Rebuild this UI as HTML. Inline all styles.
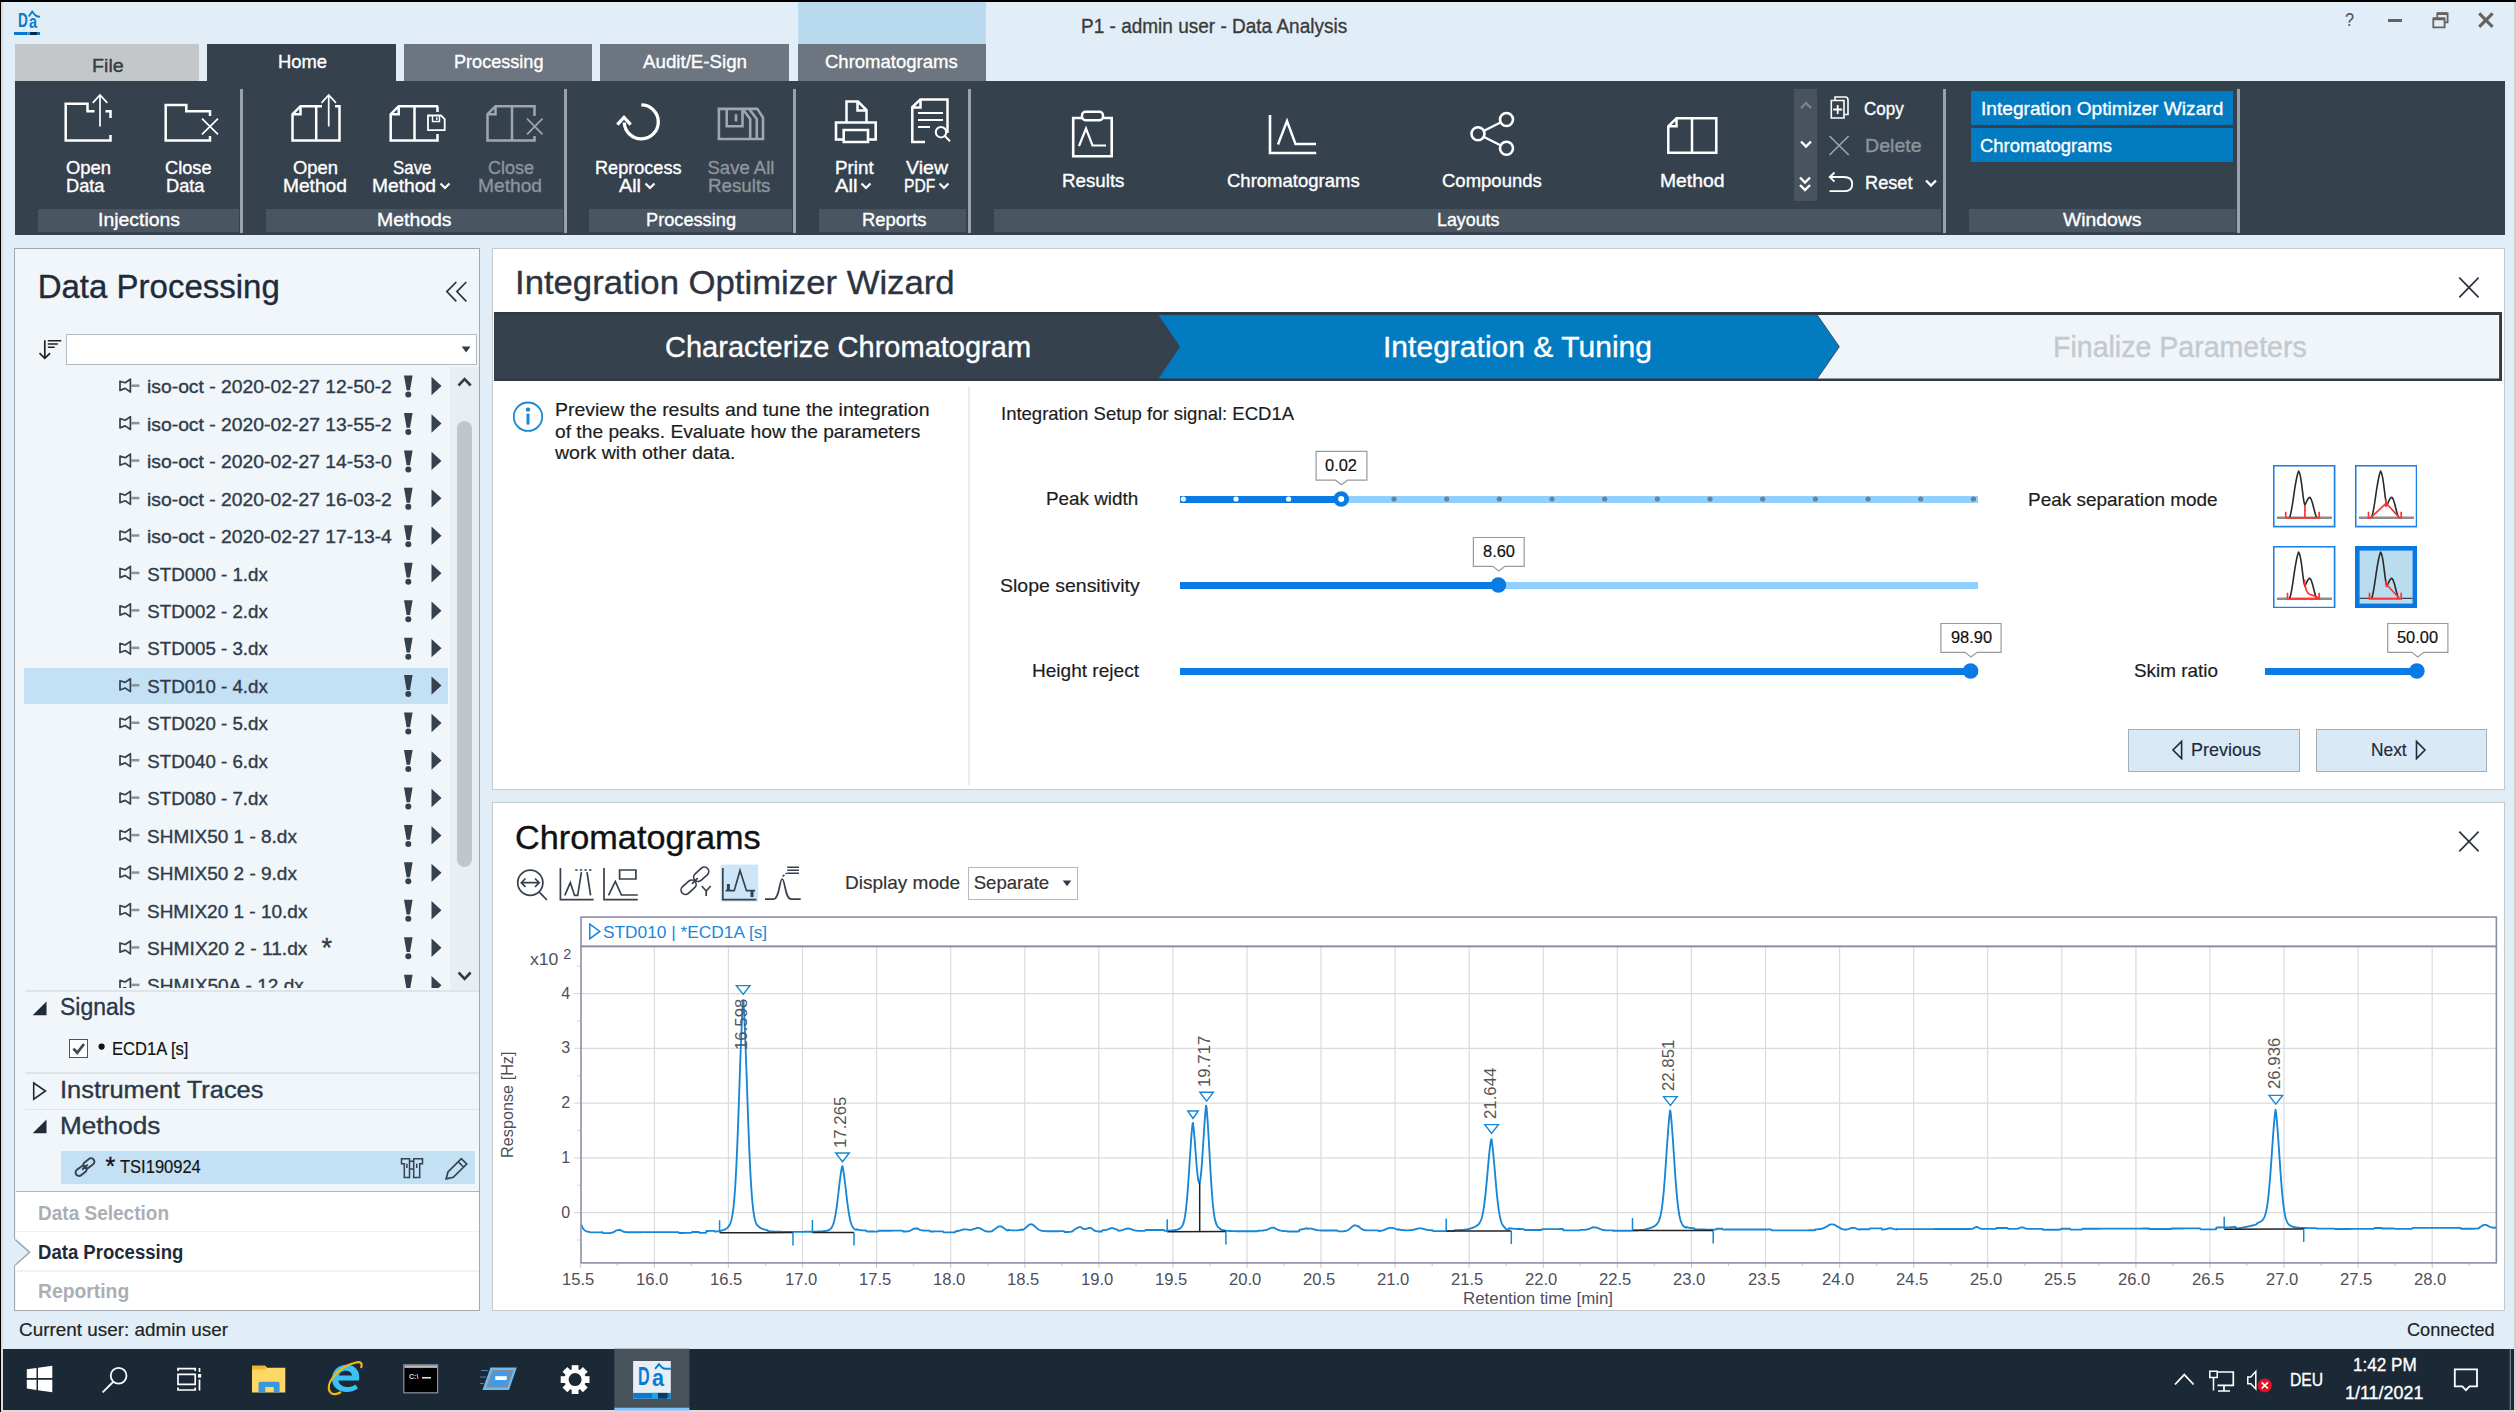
<!DOCTYPE html>
<html><head><meta charset="utf-8"><title>Data Analysis</title>
<style>
html,body{margin:0;padding:0;background:#e1eef7;}
body{width:2516px;height:1412px;position:relative;overflow:hidden;font-family:"Liberation Sans",sans-serif;}
.t{position:absolute;white-space:nowrap;display:block;}
.b{position:absolute;display:block;}
</style></head><body>
<div class="b" style="left:0px;top:0px;width:2516px;height:1412px;background:#e1eef7;"></div>
<div class="b" style="left:0px;top:0px;width:2516px;height:2px;background:#000;"></div>
<div class="b" style="left:0px;top:2px;width:1px;height:1410px;background:#000;"></div>
<div class="b" style="left:1px;top:2px;width:2px;height:1410px;background:#dcdcdc;"></div>
<div class="b" style="left:2514px;top:2px;width:2px;height:1410px;background:#cfcfcf;"></div>
<div class="b" style="left:1px;top:1410.4px;width:2515px;height:1.599999999999909px;background:#dcdcdc;"></div>
<div class="b" style="left:798px;top:2px;width:188px;height:42px;background:#b9d9ee;"></div>
<span class="t" style="left:1080.60px;top:13.62px;font-size:20.5px;line-height:23.555px;color:#3b3b3b;transform:scaleX(0.9271);transform-origin:0 0;-webkit-text-stroke:0.35px #3b3b3b;">P1 - admin user - Data Analysis</span>
<span class="t" style="left:2345.00px;top:10.18px;font-size:17.5px;line-height:20.108px;color:#46566b;transform:scaleX(0.9247);transform-origin:0 0;-webkit-text-stroke:0.18px #46566b;">?</span>
<div class="b" style="left:2387.5px;top:18.6px;width:14.0px;height:3.0px;background:#68625e;"></div>
<svg class="b" style="left:2431px;top:11px;" width="20" height="18" viewBox="0 0 20 18"><path d="M6.3 6.3V2.3H16.6V11.3H13.6M2.3 7.3H13.6V16.3H2.3Z" fill="none" stroke="#68625e" stroke-width="1.8"/><path d="M6.3 2.6H16.6M2.3 7.9H13.6" stroke="#68625e" stroke-width="2.6"/></svg>
<svg class="b" style="left:2476px;top:10px;" width="20" height="20" viewBox="0 0 20 20"><path d="M3.2 3.4L16.6 16.8M16.6 3.4L3.2 16.8" stroke="#68625e" stroke-width="3.1" fill="none"/></svg>
<span class="t" style="left:17.60px;top:9.20px;font-size:20.3px;line-height:23.325px;color:#0a7cc9;font-weight:bold;transform:scaleX(0.6685);transform-origin:0 0;">D</span>
<span class="t" style="left:28.60px;top:11.78px;font-size:17.5px;line-height:20.108px;color:#0a7cc9;font-weight:bold;transform:scaleX(0.8219);transform-origin:0 0;">a</span>
<svg class="b" style="left:27px;top:9px;" width="16" height="10" viewBox="0 0 16 10"><path d="M1.8 7.6L5.2 2.6L8 6Q10 8 13 7.7" fill="none" stroke="#0a7cc9" stroke-width="1.8"/></svg>
<div class="b" style="left:14.3px;top:31.7px;width:15.7px;height:3.8000000000000007px;background:#0878d0;"></div>
<div class="b" style="left:27px;top:31.7px;width:3px;height:3.8000000000000007px;background:#19a8e0;"></div>
<div class="b" style="left:30px;top:31.7px;width:7px;height:3.8000000000000007px;background:#072a55;"></div>
<div class="b" style="left:37px;top:31.7px;width:2.6000000000000014px;height:3.8000000000000007px;background:#0878d0;"></div>
<div class="b" style="left:15px;top:44px;width:184px;height:37px;background:#c3c7ca;"></div>
<div class="b" style="left:207px;top:44px;width:189px;height:38px;background:#36414e;"></div>
<div class="b" style="left:404px;top:44px;width:188px;height:37px;background:#6c7580;"></div>
<div class="b" style="left:600px;top:44px;width:189px;height:37px;background:#6c7580;"></div>
<div class="b" style="left:798px;top:44px;width:188px;height:37px;background:#6c7580;"></div>
<span class="t" style="left:91.80px;top:54.56px;font-size:18.5px;line-height:21.256px;color:#3a3a3a;transform:scaleX(1.0634);transform-origin:0 0;-webkit-text-stroke:0.35px #3a3a3a;">File</span>
<span class="t" style="left:277.50px;top:51.36px;font-size:18.5px;line-height:21.256px;color:#fff;transform:scaleX(0.9929);transform-origin:0 0;-webkit-text-stroke:0.35px #fff;">Home</span>
<span class="t" style="left:454.00px;top:51.36px;font-size:18.5px;line-height:21.256px;color:#fff;transform:scaleX(0.9779);transform-origin:0 0;-webkit-text-stroke:0.35px #fff;">Processing</span>
<span class="t" style="left:642.50px;top:51.36px;font-size:18.5px;line-height:21.256px;color:#fff;transform:scaleX(1.0113);transform-origin:0 0;-webkit-text-stroke:0.35px #fff;">Audit/E-Sign</span>
<span class="t" style="left:825.00px;top:51.36px;font-size:18.5px;line-height:21.256px;color:#fff;-webkit-text-stroke:0.35px #fff;">Chromatograms</span>
<div class="b" style="left:15px;top:81px;width:2490px;height:154.4px;background:#36414e;"></div>
<div class="b" style="left:38px;top:209px;width:201px;height:23px;background:#4a5562;"></div>
<div class="b" style="left:266px;top:209px;width:296.5px;height:23px;background:#4a5562;"></div>
<div class="b" style="left:589px;top:209px;width:203px;height:23px;background:#4a5562;"></div>
<div class="b" style="left:819px;top:209px;width:147px;height:23px;background:#4a5562;"></div>
<div class="b" style="left:994px;top:209px;width:947px;height:23px;background:#4a5562;"></div>
<div class="b" style="left:1969px;top:209px;width:266.5px;height:23px;background:#4a5562;"></div>
<div class="b" style="left:239.5px;top:89px;width:3.0px;height:143.5px;background:#9ba2ab;"></div>
<div class="b" style="left:563.5px;top:89px;width:3.0px;height:143.5px;background:#9ba2ab;"></div>
<div class="b" style="left:793px;top:89px;width:3px;height:143.5px;background:#9ba2ab;"></div>
<div class="b" style="left:967.5px;top:89px;width:3.0px;height:143.5px;background:#9ba2ab;"></div>
<div class="b" style="left:1942.5px;top:89px;width:3.0px;height:143.5px;background:#9ba2ab;"></div>
<div class="b" style="left:2236.5px;top:89px;width:3.0px;height:143.5px;background:#9ba2ab;"></div>
<span class="t" style="left:98.00px;top:208.96px;font-size:18.5px;line-height:21.256px;color:#fff;transform:scaleX(1.0492);transform-origin:0 0;-webkit-text-stroke:0.35px #fff;">Injections</span>
<span class="t" style="left:377.00px;top:208.96px;font-size:18.5px;line-height:21.256px;color:#fff;transform:scaleX(1.0499);transform-origin:0 0;-webkit-text-stroke:0.35px #fff;">Methods</span>
<span class="t" style="left:646.00px;top:208.96px;font-size:18.5px;line-height:21.256px;color:#fff;transform:scaleX(0.9834);transform-origin:0 0;-webkit-text-stroke:0.35px #fff;">Processing</span>
<span class="t" style="left:861.50px;top:208.96px;font-size:18.5px;line-height:21.256px;color:#fff;transform:scaleX(0.9957);transform-origin:0 0;-webkit-text-stroke:0.35px #fff;">Reports</span>
<span class="t" style="left:1437.00px;top:208.96px;font-size:18.5px;line-height:21.256px;color:#fff;transform:scaleX(0.9646);transform-origin:0 0;-webkit-text-stroke:0.35px #fff;">Layouts</span>
<span class="t" style="left:2063.00px;top:208.96px;font-size:18.5px;line-height:21.256px;color:#fff;transform:scaleX(1.0460);transform-origin:0 0;-webkit-text-stroke:0.35px #fff;">Windows</span>
<span class="t" style="left:65.70px;top:156.66px;font-size:18.5px;line-height:21.256px;color:#fff;transform:scaleX(0.9943);transform-origin:0 0;-webkit-text-stroke:0.35px #fff;">Open</span>
<span class="t" style="left:65.50px;top:175.16px;font-size:18.5px;line-height:21.256px;color:#fff;transform:scaleX(0.9852);transform-origin:0 0;-webkit-text-stroke:0.35px #fff;">Data</span>
<span class="t" style="left:164.50px;top:156.66px;font-size:18.5px;line-height:21.256px;color:#fff;transform:scaleX(0.9831);transform-origin:0 0;-webkit-text-stroke:0.35px #fff;">Close</span>
<span class="t" style="left:165.50px;top:175.16px;font-size:18.5px;line-height:21.256px;color:#fff;transform:scaleX(0.9852);transform-origin:0 0;-webkit-text-stroke:0.35px #fff;">Data</span>
<span class="t" style="left:292.50px;top:156.66px;font-size:18.5px;line-height:21.256px;color:#fff;transform:scaleX(0.9943);transform-origin:0 0;-webkit-text-stroke:0.35px #fff;">Open</span>
<span class="t" style="left:282.50px;top:175.16px;font-size:18.5px;line-height:21.256px;color:#fff;transform:scaleX(1.0339);transform-origin:0 0;-webkit-text-stroke:0.35px #fff;">Method</span>
<span class="t" style="left:392.50px;top:156.66px;font-size:18.5px;line-height:21.256px;color:#fff;transform:scaleX(0.9130);transform-origin:0 0;-webkit-text-stroke:0.35px #fff;">Save</span>
<span class="t" style="left:371.50px;top:175.16px;font-size:18.5px;line-height:21.256px;color:#fff;transform:scaleX(1.0371);transform-origin:0 0;-webkit-text-stroke:0.35px #fff;">Method</span>
<svg class="b" style="left:438.5px;top:181px;" width="12" height="10" viewBox="0 0 12 10"><path d="M1.5 2.5L6 7L10.5 2.5" fill="none" stroke="#fff" stroke-width="2.2"/></svg>
<span class="t" style="left:488.00px;top:156.66px;font-size:18.5px;line-height:21.256px;color:#8d949c;transform:scaleX(0.9725);transform-origin:0 0;-webkit-text-stroke:0.35px #8d949c;">Close</span>
<span class="t" style="left:477.50px;top:175.16px;font-size:18.5px;line-height:21.256px;color:#8d949c;transform:scaleX(1.0371);transform-origin:0 0;-webkit-text-stroke:0.35px #8d949c;">Method</span>
<span class="t" style="left:594.50px;top:156.66px;font-size:18.5px;line-height:21.256px;color:#fff;transform:scaleX(0.9782);transform-origin:0 0;-webkit-text-stroke:0.35px #fff;">Reprocess</span>
<span class="t" style="left:619.00px;top:175.16px;font-size:18.5px;line-height:21.256px;color:#fff;transform:scaleX(1.0700);transform-origin:0 0;-webkit-text-stroke:0.35px #fff;">All</span>
<svg class="b" style="left:644px;top:181px;" width="12" height="10" viewBox="0 0 12 10"><path d="M1.5 2.5L6 7L10.5 2.5" fill="none" stroke="#fff" stroke-width="2.2"/></svg>
<span class="t" style="left:707.50px;top:156.66px;font-size:18.5px;line-height:21.256px;color:#8d949c;-webkit-text-stroke:0.35px #8d949c;">Save All</span>
<span class="t" style="left:707.50px;top:175.16px;font-size:18.5px;line-height:21.256px;color:#8d949c;transform:scaleX(1.0131);transform-origin:0 0;-webkit-text-stroke:0.35px #8d949c;">Results</span>
<span class="t" style="left:835.00px;top:156.66px;font-size:18.5px;line-height:21.256px;color:#fff;transform:scaleX(1.0173);transform-origin:0 0;-webkit-text-stroke:0.35px #fff;">Print</span>
<span class="t" style="left:834.50px;top:175.16px;font-size:18.5px;line-height:21.256px;color:#fff;transform:scaleX(1.0943);transform-origin:0 0;-webkit-text-stroke:0.35px #fff;">All</span>
<svg class="b" style="left:860px;top:181px;" width="12" height="10" viewBox="0 0 12 10"><path d="M1.5 2.5L6 7L10.5 2.5" fill="none" stroke="#fff" stroke-width="2.2"/></svg>
<span class="t" style="left:906.00px;top:156.66px;font-size:18.5px;line-height:21.256px;color:#fff;transform:scaleX(1.0562);transform-origin:0 0;-webkit-text-stroke:0.35px #fff;">View</span>
<span class="t" style="left:903.70px;top:175.16px;font-size:18.5px;line-height:21.256px;color:#fff;transform:scaleX(0.8459);transform-origin:0 0;-webkit-text-stroke:0.35px #fff;">PDF</span>
<svg class="b" style="left:938px;top:181px;" width="12" height="10" viewBox="0 0 12 10"><path d="M1.5 2.5L6 7L10.5 2.5" fill="none" stroke="#fff" stroke-width="2.2"/></svg>
<span class="t" style="left:1062.00px;top:169.96px;font-size:18.5px;line-height:21.256px;color:#fff;transform:scaleX(1.0131);transform-origin:0 0;-webkit-text-stroke:0.35px #fff;">Results</span>
<span class="t" style="left:1227.00px;top:169.96px;font-size:18.5px;line-height:21.256px;color:#fff;-webkit-text-stroke:0.35px #fff;">Chromatograms</span>
<span class="t" style="left:1442.00px;top:169.96px;font-size:18.5px;line-height:21.256px;color:#fff;-webkit-text-stroke:0.35px #fff;">Compounds</span>
<span class="t" style="left:1660.00px;top:169.96px;font-size:18.5px;line-height:21.256px;color:#fff;transform:scaleX(1.0453);transform-origin:0 0;-webkit-text-stroke:0.35px #fff;">Method</span>
<div class="b" style="left:1794px;top:89px;width:23px;height:112px;background:#49535f;"></div>
<svg class="b" style="left:1799px;top:100px;" width="14" height="10" viewBox="0 0 14 10"><path d="M2 8L7 3L12 8" fill="none" stroke="#7d8690" stroke-width="2.2"/></svg>
<svg class="b" style="left:1799px;top:139px;" width="14" height="10" viewBox="0 0 14 10"><path d="M2 2.5L7 7.5L12 2.5" fill="none" stroke="#fff" stroke-width="2.4"/></svg>
<svg class="b" style="left:1798px;top:175px;" width="14" height="18" viewBox="0 0 14 18"><path d="M2 2.5L7 7.5L12 2.5M2 10L7 15L12 10" fill="none" stroke="#fff" stroke-width="2.4"/></svg>
<span class="t" style="left:1864.00px;top:97.96px;font-size:18.5px;line-height:21.256px;color:#fff;transform:scaleX(0.9192);transform-origin:0 0;-webkit-text-stroke:0.35px #fff;">Copy</span>
<span class="t" style="left:1865.00px;top:135.46px;font-size:18.5px;line-height:21.256px;color:#8d949c;transform:scaleX(1.0602);transform-origin:0 0;-webkit-text-stroke:0.35px #8d949c;">Delete</span>
<span class="t" style="left:1865.00px;top:171.66px;font-size:18.5px;line-height:21.256px;color:#fff;transform:scaleX(0.9829);transform-origin:0 0;-webkit-text-stroke:0.35px #fff;">Reset</span>
<svg class="b" style="left:1924px;top:178px;" width="14" height="10" viewBox="0 0 14 10"><path d="M2 2.5L7 7.5L12 2.5" fill="none" stroke="#fff" stroke-width="2.4"/></svg>
<div class="b" style="left:1970.5px;top:90.5px;width:262.5px;height:34.5px;background:#037bc1;"></div>
<div class="b" style="left:1970.5px;top:128px;width:262.5px;height:34px;background:#037bc1;"></div>
<span class="t" style="left:1980.70px;top:97.96px;font-size:18.5px;line-height:21.256px;color:#fff;transform:scaleX(1.0336);transform-origin:0 0;-webkit-text-stroke:0.35px #fff;">Integration Optimizer Wizard</span>
<span class="t" style="left:1980.00px;top:135.46px;font-size:18.5px;line-height:21.256px;color:#fff;transform:scaleX(0.9952);transform-origin:0 0;-webkit-text-stroke:0.35px #fff;">Chromatograms</span>
<svg class="b" style="left:0px;top:0px;" width="2516" height="240" viewBox="0 0 2516 240"><path d="M110.5 135V140.5H65.7V103.7H87.5V111.2H94.5 M105.5 111.2H110.5V118" fill="none" stroke="#fff" stroke-width="2.5" /><path d="M100 126.5V95 M92.7 102.8L100 95L107.3 102.8" fill="none" stroke="#fff" stroke-width="1.7" /><path d="M210 136V140.5H165.7V104.9H186.3V111.2H210V116" fill="none" stroke="#fff" stroke-width="2.5" /><path d="M202 118.7L218 134.3M218 118.7L202 134.3" fill="none" stroke="#fff" stroke-width="1.7" /><path d="M322 106.2H300.5L292.5 114.2V140.5H339.5V111 M316.2 106.2V140.5 M292.5 114.2H300.5V106.2 M335 106.2H339.5V111" fill="none" stroke="#fff" stroke-width="2.5" /><path d="M328.7 126.5V95 M321.5 102.8L328.7 95L336 102.8" fill="none" stroke="#fff" stroke-width="1.7" /><path d="M438 106.2H398.7L390.7 114.2V140.5H437.5V134 M414.5 106.2V140.5 M390.7 114.2H398.7V106.2 M437.5 106.2V112" fill="none" stroke="#fff" stroke-width="2.5" /><path d="M428 115.5H441L444.7 119.2V130.2H428Z" fill="#36414e" stroke="#fff" stroke-width="1.8" /><path d="M432.5 116V121.5H439.5V116 M436.8 117.2V120" fill="none" stroke="#fff" stroke-width="1.4" /><path d="M534.5 116V106.2H495.5L487.5 114.2V140.5H534.5V136 M512 106.2V140.5 M487.5 114.2H495.5V106.2" fill="none" stroke="#a0a6b0" stroke-width="2.5" /><path d="M527 118.7L542.5 134.3M542.5 118.7L527 134.3" fill="none" stroke="#a0a6b0" stroke-width="1.7" /><path d="M641.3 104.9A17 17 0 1 1 624.3 122.5" fill="none" stroke="#fff" stroke-width="3.3" /><path d="M617.3 124.6L624 117.4L630.7 124.6" fill="none" stroke="#fff" stroke-width="3.3" /><path d="M718.9 108.9H757.3L763 117.5V139H718.9Z M726.7 109V126.3H742.5V109 M736 114.2V121.4" fill="none" stroke="#a0a6b0" stroke-width="2.6" /><path d="M743 109.5L750.2 119V139 M749.5 109.5L756.8 119V139" fill="none" stroke="#a0a6b0" stroke-width="2.6" /><path d="M846.5 122V101.5H858L866.5 110V122 M857.5 101.5V110.5H866.5" fill="none" stroke="#fff" stroke-width="2.5" /><path d="M843.5 139.5H836V122.5H875.7V139.5H868" fill="none" stroke="#fff" stroke-width="2.6" /><path d="M843.7 130H868V142H843.7Z" fill="none" stroke="#fff" stroke-width="2.6" /><path d="M925 142H912.3V107L920.3 99.5H947.5V133 M912.5 107.5H920.5V99.5" fill="none" stroke="#fff" stroke-width="2.5" /><path d="M918 113H943M918 120H943M918 127H930" fill="none" stroke="#fff" stroke-width="2.2" /><path d="M941 132.2m-5.2 0a5.2 5.2 0 1 0 10.4 0a5.2 5.2 0 1 0 -10.4 0 M944.8 136L950 141.2" fill="#36414e" stroke="#fff" stroke-width="2" /><path d="M1082 118H1073.2V156.2H1111.7V118H1103" fill="none" stroke="#fff" stroke-width="2.6" /><rect x="1082" y="111.7" width="21" height="8.6" rx="3.5" fill="none" stroke="#fff" stroke-width="2.4"/><path d="M1079 146L1086 128.5L1092.5 145.5H1106" fill="none" stroke="#fff" stroke-width="2.2" /><path d="M1270 115V153H1316.2" fill="none" stroke="#fff" stroke-width="2.6" /><path d="M1278 144.5L1287 121L1295.5 144H1316" fill="none" stroke="#fff" stroke-width="2.4" /><path d="M1484 130.7L1500.5 122.5 M1484 137L1500.5 145.2" fill="none" stroke="#fff" stroke-width="2.4" /><circle cx="1506.5" cy="119.5" r="6.5" fill="none" stroke="#fff" stroke-width="2.6"/><circle cx="1478" cy="133.8" r="6.5" fill="none" stroke="#fff" stroke-width="2.6"/><circle cx="1506.5" cy="148.2" r="6.5" fill="none" stroke="#fff" stroke-width="2.6"/><path d="M1676.5 118.2H1716.3V152.7H1668.3V126.3Z M1692 118.2V152.7 M1668.3 126.3H1676.5V118.2" fill="none" stroke="#fff" stroke-width="2.5" /><path d="M1831.3 100.5H1844V118H1831.3Z" fill="none" stroke="#fff" stroke-width="1.6" /><path d="M1835 100V97H1845.5Q1848 97 1848 100V114.5H1844.5" fill="none" stroke="#fff" stroke-width="1.6" /><path d="M1837.7 105V114M1833.2 109.5H1842.2" fill="none" stroke="#fff" stroke-width="1.8" /><path d="M1829.5 136L1848.7 155M1848.7 136L1829.5 155" fill="none" stroke="#a0a6b0" stroke-width="1.6" /><path d="M1829.5 177H1844Q1852.2 177 1852.2 184.2Q1852.2 191.2 1844 191.2H1829.5" fill="none" stroke="#fff" stroke-width="1.8" /><path d="M1834.5 172.5L1829.7 177L1834.5 181.7" fill="none" stroke="#fff" stroke-width="1.8" /></svg>
<div class="b" style="left:14.4px;top:248px;width:465.6px;height:1063.2px;background:#f1f6fa;border:1.8px solid #a3a9b1;box-sizing:border-box;"></div>
<span class="t" style="left:37.70px;top:267.61px;font-size:33px;line-height:37.917px;color:#1f2b3a;-webkit-text-stroke:0.35px #1f2b3a;">Data Processing</span>
<svg class="b" style="left:444px;top:280px;" width="26" height="24" viewBox="0 0 26 24"><path d="M12.3 2L2.8 11.6L12.3 21.3M22.3 2L12.9 11.6L22.3 21.3" fill="none" stroke="#2b3440" stroke-width="1.7"/></svg>
<svg class="b" style="left:36px;top:336px;" width="30" height="26" viewBox="0 0 30 26"><path d="M8.8 4.3V22M3.5 17.2L8.8 22.3L14.1 17.2" fill="none" stroke="#222" stroke-width="1.7"/><path d="M11.8 4.7H25.3M11.8 8.1H21.8M11.8 11.3H18.6" stroke="#222" stroke-width="1.5"/></svg>
<div class="b" style="left:66px;top:334px;width:410.5px;height:30.69999999999999px;background:#fff;border:1.5px solid #b3babf;box-sizing:border-box;"></div>
<svg class="b" style="left:460px;top:345px;" width="12" height="9" viewBox="0 0 12 9"><path d="M1.7 1.4H10.5L6.1 7.4Z" fill="#2f3b49"/></svg>
<div class="b" style="left:450.4px;top:367px;width:28.200000000000045px;height:623px;background:#e9eef2;"></div>
<svg class="b" style="left:456px;top:375px;" width="18" height="13" viewBox="0 0 18 13"><path d="M2.5 10.5L8.6 4.2L14.7 10.5" fill="none" stroke="#2f3b49" stroke-width="2.6"/></svg>
<svg class="b" style="left:456px;top:969px;" width="18" height="13" viewBox="0 0 18 13"><path d="M2.6 3.5L8.6 9.8L14.6 3.5" fill="none" stroke="#2f3b49" stroke-width="2.6"/></svg>
<div class="b" style="left:456.7px;top:421px;width:15.300000000000011px;height:445.6px;background:#c1c6ca;border-radius:7.6px;"></div>
<div class="b" style="left:24px;top:668.1px;width:424.4px;height:35.5px;background:#c3e0f4;"></div>
<div class="b" style="left:16px;top:366px;width:434px;height:621.5px;overflow:hidden;">
<span class="t" style="left:131.30px;top:10.28px;font-size:18.7px;line-height:21.486px;color:#2f3b49;transform:scaleX(1.0337);transform-origin:0 0;-webkit-text-stroke:0.35px #2f3b49;">iso-oct - 2020-02-27 12-50-2</span>
<span class="t" style="left:131.30px;top:47.73px;font-size:18.7px;line-height:21.486px;color:#2f3b49;transform:scaleX(1.0337);transform-origin:0 0;-webkit-text-stroke:0.35px #2f3b49;">iso-oct - 2020-02-27 13-55-2</span>
<span class="t" style="left:131.30px;top:85.18px;font-size:18.7px;line-height:21.486px;color:#2f3b49;transform:scaleX(1.0337);transform-origin:0 0;-webkit-text-stroke:0.35px #2f3b49;">iso-oct - 2020-02-27 14-53-0</span>
<span class="t" style="left:131.30px;top:122.63px;font-size:18.7px;line-height:21.486px;color:#2f3b49;transform:scaleX(1.0337);transform-origin:0 0;-webkit-text-stroke:0.35px #2f3b49;">iso-oct - 2020-02-27 16-03-2</span>
<span class="t" style="left:131.30px;top:160.08px;font-size:18.7px;line-height:21.486px;color:#2f3b49;transform:scaleX(1.0337);transform-origin:0 0;-webkit-text-stroke:0.35px #2f3b49;">iso-oct - 2020-02-27 17-13-4</span>
<span class="t" style="left:131.30px;top:197.53px;font-size:18.7px;line-height:21.486px;color:#2f3b49;-webkit-text-stroke:0.35px #2f3b49;">STD000 - 1.dx</span>
<span class="t" style="left:131.30px;top:234.98px;font-size:18.7px;line-height:21.486px;color:#2f3b49;-webkit-text-stroke:0.35px #2f3b49;">STD002 - 2.dx</span>
<span class="t" style="left:131.30px;top:272.43px;font-size:18.7px;line-height:21.486px;color:#2f3b49;-webkit-text-stroke:0.35px #2f3b49;">STD005 - 3.dx</span>
<span class="t" style="left:131.30px;top:309.88px;font-size:18.7px;line-height:21.486px;color:#2f3b49;-webkit-text-stroke:0.35px #2f3b49;">STD010 - 4.dx</span>
<span class="t" style="left:131.30px;top:347.33px;font-size:18.7px;line-height:21.486px;color:#2f3b49;-webkit-text-stroke:0.35px #2f3b49;">STD020 - 5.dx</span>
<span class="t" style="left:131.30px;top:384.78px;font-size:18.7px;line-height:21.486px;color:#2f3b49;-webkit-text-stroke:0.35px #2f3b49;">STD040 - 6.dx</span>
<span class="t" style="left:131.30px;top:422.23px;font-size:18.7px;line-height:21.486px;color:#2f3b49;-webkit-text-stroke:0.35px #2f3b49;">STD080 - 7.dx</span>
<span class="t" style="left:131.30px;top:459.68px;font-size:18.7px;line-height:21.486px;color:#2f3b49;transform:scaleX(1.0164);transform-origin:0 0;-webkit-text-stroke:0.35px #2f3b49;">SHMIX50 1 - 8.dx</span>
<span class="t" style="left:131.30px;top:497.13px;font-size:18.7px;line-height:21.486px;color:#2f3b49;transform:scaleX(1.0164);transform-origin:0 0;-webkit-text-stroke:0.35px #2f3b49;">SHMIX50 2 - 9.dx</span>
<span class="t" style="left:131.30px;top:534.58px;font-size:18.7px;line-height:21.486px;color:#2f3b49;transform:scaleX(1.0159);transform-origin:0 0;-webkit-text-stroke:0.35px #2f3b49;">SHMIX20 1 - 10.dx</span>
<span class="t" style="left:131.30px;top:572.03px;font-size:18.7px;line-height:21.486px;color:#2f3b49;transform:scaleX(1.0249);transform-origin:0 0;-webkit-text-stroke:0.35px #2f3b49;">SHMIX20 2 - 11.dx</span>
<span class="t" style="left:131.30px;top:609.48px;font-size:18.7px;line-height:21.486px;color:#2f3b49;transform:scaleX(1.0206);transform-origin:0 0;-webkit-text-stroke:0.35px #2f3b49;">SHMIX50A - 12.dx</span>
<svg class="b" style="left:0px;top:0px;" width="434" height="640" viewBox="0 0 434 640"><path d="M104 15.2V24.4L109.2 22.4L114.4 26.0V13.2L109.2 16.8Z" fill="none" stroke="#36414e" stroke-width="1.7" stroke-linejoin="round"/><path d="M115.30000000000001 19.7H123.4" stroke="#89929b" stroke-width="2.5"/><path d="M388 9.5H396.6L394 24.3H390.6Z" fill="#36414e"/><circle cx="392.3" cy="28.5" r="3" fill="#36414e"/><path d="M415.5 10.8L425.5 20.0L415.5 29.2Z" fill="#36414e"/><path d="M104 52.64999999999999V61.84999999999999L109.2 59.84999999999999L114.4 63.44999999999999V50.64999999999999L109.2 54.249999999999986Z" fill="none" stroke="#36414e" stroke-width="1.7" stroke-linejoin="round"/><path d="M115.30000000000001 57.14999999999999H123.4" stroke="#89929b" stroke-width="2.5"/><path d="M388 46.94999999999999H396.6L394 61.749999999999986H390.6Z" fill="#36414e"/><circle cx="392.3" cy="65.94999999999999" r="3" fill="#36414e"/><path d="M415.5 48.249999999999986L425.5 57.44999999999999L415.5 66.64999999999999Z" fill="#36414e"/><path d="M104 90.09999999999998V99.29999999999998L109.2 97.29999999999998L114.4 100.89999999999998V88.09999999999998L109.2 91.69999999999997Z" fill="none" stroke="#36414e" stroke-width="1.7" stroke-linejoin="round"/><path d="M115.30000000000001 94.59999999999998H123.4" stroke="#89929b" stroke-width="2.5"/><path d="M388 84.39999999999998H396.6L394 99.19999999999997H390.6Z" fill="#36414e"/><circle cx="392.3" cy="103.39999999999998" r="3" fill="#36414e"/><path d="M415.5 85.69999999999997L425.5 94.89999999999998L415.5 104.09999999999998Z" fill="#36414e"/><path d="M104 127.55000000000003V136.75000000000003L109.2 134.75000000000003L114.4 138.35000000000002V125.55000000000003L109.2 129.15000000000003Z" fill="none" stroke="#36414e" stroke-width="1.7" stroke-linejoin="round"/><path d="M115.30000000000001 132.05H123.4" stroke="#89929b" stroke-width="2.5"/><path d="M388 121.85000000000002H396.6L394 136.65000000000003H390.6Z" fill="#36414e"/><circle cx="392.3" cy="140.85000000000002" r="3" fill="#36414e"/><path d="M415.5 123.15000000000002L425.5 132.35000000000002L415.5 141.55Z" fill="#36414e"/><path d="M104 164.99999999999994V174.19999999999996L109.2 172.19999999999996L114.4 175.79999999999995V162.99999999999994L109.2 166.59999999999997Z" fill="none" stroke="#36414e" stroke-width="1.7" stroke-linejoin="round"/><path d="M115.30000000000001 169.49999999999994H123.4" stroke="#89929b" stroke-width="2.5"/><path d="M388 159.29999999999995H396.6L394 174.09999999999997H390.6Z" fill="#36414e"/><circle cx="392.3" cy="178.29999999999995" r="3" fill="#36414e"/><path d="M415.5 160.59999999999997L425.5 169.79999999999995L415.5 178.99999999999994Z" fill="#36414e"/><path d="M104 202.45V211.65L109.2 209.65L114.4 213.25V200.45L109.2 204.05Z" fill="none" stroke="#36414e" stroke-width="1.7" stroke-linejoin="round"/><path d="M115.30000000000001 206.95H123.4" stroke="#89929b" stroke-width="2.5"/><path d="M388 196.75H396.6L394 211.55H390.6Z" fill="#36414e"/><circle cx="392.3" cy="215.75" r="3" fill="#36414e"/><path d="M415.5 198.05L425.5 207.25L415.5 216.45Z" fill="#36414e"/><path d="M104 239.90000000000003V249.10000000000005L109.2 247.10000000000005L114.4 250.70000000000005V237.90000000000003L109.2 241.50000000000006Z" fill="none" stroke="#36414e" stroke-width="1.7" stroke-linejoin="round"/><path d="M115.30000000000001 244.40000000000003H123.4" stroke="#89929b" stroke-width="2.5"/><path d="M388 234.20000000000005H396.6L394 249.00000000000006H390.6Z" fill="#36414e"/><circle cx="392.3" cy="253.20000000000005" r="3" fill="#36414e"/><path d="M415.5 235.50000000000006L425.5 244.70000000000005L415.5 253.90000000000003Z" fill="#36414e"/><path d="M104 277.3500000000001V286.55000000000007L109.2 284.55000000000007L114.4 288.1500000000001V275.3500000000001L109.2 278.9500000000001Z" fill="none" stroke="#36414e" stroke-width="1.7" stroke-linejoin="round"/><path d="M115.30000000000001 281.8500000000001H123.4" stroke="#89929b" stroke-width="2.5"/><path d="M388 271.6500000000001H396.6L394 286.4500000000001H390.6Z" fill="#36414e"/><circle cx="392.3" cy="290.6500000000001" r="3" fill="#36414e"/><path d="M415.5 272.9500000000001L425.5 282.1500000000001L415.5 291.3500000000001Z" fill="#36414e"/><path d="M104 314.8V324.0L109.2 322.0L114.4 325.6V312.8L109.2 316.40000000000003Z" fill="none" stroke="#36414e" stroke-width="1.7" stroke-linejoin="round"/><path d="M115.30000000000001 319.3H123.4" stroke="#89929b" stroke-width="2.5"/><path d="M388 309.1H396.6L394 323.90000000000003H390.6Z" fill="#36414e"/><circle cx="392.3" cy="328.1" r="3" fill="#36414e"/><path d="M415.5 310.40000000000003L425.5 319.6L415.5 328.8Z" fill="#36414e"/><path d="M104 352.24999999999994V361.44999999999993L109.2 359.44999999999993L114.4 363.04999999999995V350.24999999999994L109.2 353.84999999999997Z" fill="none" stroke="#36414e" stroke-width="1.7" stroke-linejoin="round"/><path d="M115.30000000000001 356.74999999999994H123.4" stroke="#89929b" stroke-width="2.5"/><path d="M388 346.54999999999995H396.6L394 361.34999999999997H390.6Z" fill="#36414e"/><circle cx="392.3" cy="365.54999999999995" r="3" fill="#36414e"/><path d="M415.5 347.84999999999997L425.5 357.04999999999995L415.5 366.24999999999994Z" fill="#36414e"/><path d="M104 389.7V398.9L109.2 396.9L114.4 400.5V387.7L109.2 391.3Z" fill="none" stroke="#36414e" stroke-width="1.7" stroke-linejoin="round"/><path d="M115.30000000000001 394.2H123.4" stroke="#89929b" stroke-width="2.5"/><path d="M388 384.0H396.6L394 398.8H390.6Z" fill="#36414e"/><circle cx="392.3" cy="403.0" r="3" fill="#36414e"/><path d="M415.5 385.3L425.5 394.5L415.5 403.7Z" fill="#36414e"/><path d="M104 427.15000000000003V436.35L109.2 434.35L114.4 437.95000000000005V425.15000000000003L109.2 428.75000000000006Z" fill="none" stroke="#36414e" stroke-width="1.7" stroke-linejoin="round"/><path d="M115.30000000000001 431.65000000000003H123.4" stroke="#89929b" stroke-width="2.5"/><path d="M388 421.45000000000005H396.6L394 436.25000000000006H390.6Z" fill="#36414e"/><circle cx="392.3" cy="440.45000000000005" r="3" fill="#36414e"/><path d="M415.5 422.75000000000006L425.5 431.95000000000005L415.5 441.15000000000003Z" fill="#36414e"/><path d="M104 464.6000000000001V473.80000000000007L109.2 471.80000000000007L114.4 475.4000000000001V462.6000000000001L109.2 466.2000000000001Z" fill="none" stroke="#36414e" stroke-width="1.7" stroke-linejoin="round"/><path d="M115.30000000000001 469.1000000000001H123.4" stroke="#89929b" stroke-width="2.5"/><path d="M388 458.9000000000001H396.6L394 473.7000000000001H390.6Z" fill="#36414e"/><circle cx="392.3" cy="477.9000000000001" r="3" fill="#36414e"/><path d="M415.5 460.2000000000001L425.5 469.4000000000001L415.5 478.6000000000001Z" fill="#36414e"/><path d="M104 502.05V511.25L109.2 509.25L114.4 512.85V500.05L109.2 503.65000000000003Z" fill="none" stroke="#36414e" stroke-width="1.7" stroke-linejoin="round"/><path d="M115.30000000000001 506.55H123.4" stroke="#89929b" stroke-width="2.5"/><path d="M388 496.35H396.6L394 511.15000000000003H390.6Z" fill="#36414e"/><circle cx="392.3" cy="515.35" r="3" fill="#36414e"/><path d="M415.5 497.65000000000003L425.5 506.85L415.5 516.0500000000001Z" fill="#36414e"/><path d="M104 539.5000000000001V548.7L109.2 546.7L114.4 550.3000000000001V537.5000000000001L109.2 541.1Z" fill="none" stroke="#36414e" stroke-width="1.7" stroke-linejoin="round"/><path d="M115.30000000000001 544.0000000000001H123.4" stroke="#89929b" stroke-width="2.5"/><path d="M388 533.8000000000001H396.6L394 548.6H390.6Z" fill="#36414e"/><circle cx="392.3" cy="552.8000000000001" r="3" fill="#36414e"/><path d="M415.5 535.1L425.5 544.3000000000001L415.5 553.5000000000001Z" fill="#36414e"/><path d="M104 576.95V586.15L109.2 584.15L114.4 587.75V574.95L109.2 578.55Z" fill="none" stroke="#36414e" stroke-width="1.7" stroke-linejoin="round"/><path d="M115.30000000000001 581.45H123.4" stroke="#89929b" stroke-width="2.5"/><path d="M388 571.25H396.6L394 586.05H390.6Z" fill="#36414e"/><circle cx="392.3" cy="590.25" r="3" fill="#36414e"/><path d="M415.5 572.55L425.5 581.75L415.5 590.95Z" fill="#36414e"/><path d="M104 614.4000000000001V623.6L109.2 621.6L114.4 625.2V612.4000000000001L109.2 616.0Z" fill="none" stroke="#36414e" stroke-width="1.7" stroke-linejoin="round"/><path d="M115.30000000000001 618.9000000000001H123.4" stroke="#89929b" stroke-width="2.5"/><path d="M388 608.7H396.6L394 623.5H390.6Z" fill="#36414e"/><circle cx="392.3" cy="627.7" r="3" fill="#36414e"/><path d="M415.5 610.0L425.5 619.2L415.5 628.4000000000001Z" fill="#36414e"/></svg>
<span class="t" style="left:305.50px;top:567.38px;font-size:27px;line-height:31.023px;color:#2f3b49;-webkit-text-stroke:0.35px #2f3b49;">*</span>
</div>
<div class="b" style="left:25px;top:990px;width:454px;height:1.5px;background:#dfe4e8;"></div>
<svg class="b" style="left:30px;top:999px;" width="20" height="20" viewBox="0 0 20 20"><path d="M16.5 2.4V16.2H2.7Z" fill="#1f2b3a"/></svg>
<span class="t" style="left:60.30px;top:993.94px;font-size:23.3px;line-height:26.772px;color:#2a3747;transform:scaleX(0.9853);transform-origin:0 0;-webkit-text-stroke:0.35px #2a3747;">Signals</span>
<div class="b" style="left:68.8px;top:1038.8px;width:19.60000000000001px;height:19.600000000000136px;background:#fff;border:1.9px solid #4a5568;box-sizing:border-box;"></div>
<svg class="b" style="left:69px;top:1039px;" width="20" height="20" viewBox="0 0 20 20"><path d="M4.4 9.6L8.2 13.8L15 5" fill="none" stroke="#3d4a5c" stroke-width="2.8"/></svg>
<svg class="b" style="left:97px;top:1042px;" width="10" height="10" viewBox="0 0 10 10"><circle cx="4.6" cy="4.6" r="3.1" fill="#111"/></svg>
<span class="t" style="left:111.50px;top:1038.61px;font-size:17.8px;line-height:20.452px;color:#111;transform:scaleX(0.9317);transform-origin:0 0;-webkit-text-stroke:0.18px #111;">ECD1A [s]</span>
<div class="b" style="left:25px;top:1072px;width:454px;height:1.5px;background:#dfe4e8;"></div>
<svg class="b" style="left:30px;top:1080px;" width="20" height="22" viewBox="0 0 20 22"><path d="M3.7 3L15.5 11L3.7 19.2Z" fill="none" stroke="#1f2b3a" stroke-width="1.6"/></svg>
<span class="t" style="left:60.30px;top:1076.54px;font-size:23.3px;line-height:26.772px;color:#2a3747;transform:scaleX(1.0913);transform-origin:0 0;-webkit-text-stroke:0.35px #2a3747;">Instrument Traces</span>
<div class="b" style="left:25px;top:1108.5px;width:454px;height:1.5px;background:#dfe4e8;"></div>
<svg class="b" style="left:30px;top:1117px;" width="20" height="20" viewBox="0 0 20 20"><path d="M16.5 2.4V16.2H2.7Z" fill="#1f2b3a"/></svg>
<span class="t" style="left:60.30px;top:1112.94px;font-size:23.3px;line-height:26.772px;color:#2a3747;transform:scaleX(1.1223);transform-origin:0 0;-webkit-text-stroke:0.35px #2a3747;">Methods</span>
<div class="b" style="left:61.2px;top:1150.7px;width:413.8px;height:33.299999999999955px;background:#c3e0f4;"></div>
<svg class="b" style="left:72px;top:1155px;" width="26" height="26" viewBox="0 0 26 26"><g fill="none" stroke="#36414e" stroke-width="1.9"><rect x="-6.2" y="-3.4" width="12.4" height="6.8" rx="3.4" transform="translate(16.8 8.4) rotate(-38)"/><rect x="-6.2" y="-3.4" width="12.4" height="6.8" rx="3.4" transform="translate(9.2 15.8) rotate(-38)"/><path d="M10.2 14.7L15.8 9.6"/></g></svg>
<span class="t" style="left:105.60px;top:1152.47px;font-size:25px;line-height:28.725px;color:#111;-webkit-text-stroke:0.35px #111;">*</span>
<span class="t" style="left:119.50px;top:1157.31px;font-size:17.8px;line-height:20.452px;color:#111;transform:scaleX(0.9289);transform-origin:0 0;-webkit-text-stroke:0.18px #111;">TSI190924</span>
<svg class="b" style="left:399px;top:1155px;" width="26" height="26" viewBox="0 0 26 26"><g fill="none" stroke="#36414e" stroke-width="1.5"><path d="M2.5 3.7H10.5V22.5H5.3V8.8H2.5Z M14.7 3.7H23.5V8.8H20.7V22.5H14.7Z M10.5 6.2H14.7M7.9 8.8V13M17.7 8.8V13M10.5 14H14.7"/></g></svg>
<svg class="b" style="left:443px;top:1155px;" width="28" height="28" viewBox="0 0 28 28"><g fill="none" stroke="#36414e" stroke-width="1.7"><path d="M3.2 23.8L5 17L18.3 3.7L23.7 9L10.3 22.3Z M15.3 6.8L20.6 12"/></g></svg>
<div class="b" style="left:16px;top:1191px;width:463px;height:119px;background:#fff;"></div>
<div class="b" style="left:16px;top:1190.6px;width:463px;height:1.400000000000091px;background:#adb4ba;"></div>
<div class="b" style="left:16px;top:1231px;width:463px;height:1.2999999999999545px;background:#eef2f5;"></div>
<div class="b" style="left:16px;top:1270.3px;width:463px;height:1.2999999999999545px;background:#eef2f5;"></div>
<span class="t" style="left:38.20px;top:1202.04px;font-size:19.5px;line-height:22.405px;color:#a9afb5;font-weight:bold;transform:scaleX(0.9748);transform-origin:0 0;">Data Selection</span>
<span class="t" style="left:38.20px;top:1241.04px;font-size:19.5px;line-height:22.405px;color:#1f2b3a;font-weight:bold;transform:scaleX(0.9515);transform-origin:0 0;">Data Processing</span>
<span class="t" style="left:38.20px;top:1280.04px;font-size:19.5px;line-height:22.405px;color:#a9afb5;font-weight:bold;transform:scaleX(0.9905);transform-origin:0 0;">Reporting</span>
<svg class="b" style="left:12px;top:1238px;" width="20" height="30" viewBox="0 0 20 30"><path d="M1 1.6H3.3L17.6 14.3L3.3 27H1Z" fill="#e1eef7"/><path d="M3.3 1.6L17.6 14.3L3.3 27" fill="none" stroke="#a3a9b1" stroke-width="1.6"/></svg>
<span class="t" style="left:19.00px;top:1320.18px;font-size:17.5px;line-height:20.108px;color:#222;transform:scaleX(1.0798);transform-origin:0 0;-webkit-text-stroke:0.18px #222;">Current user: admin user</span>
<span class="t" style="left:2406.70px;top:1320.18px;font-size:17.5px;line-height:20.108px;color:#222;transform:scaleX(1.0349);transform-origin:0 0;-webkit-text-stroke:0.18px #222;">Connected</span>
<div class="b" style="left:492.3px;top:248px;width:2012.5000000000002px;height:542px;background:#fff;border:1.8px solid #c5cacd;box-sizing:border-box;"></div>
<span class="t" style="left:515.30px;top:263.81px;font-size:33px;line-height:37.917px;color:#2b3440;transform:scaleX(1.0513);transform-origin:0 0;-webkit-text-stroke:0.35px #2b3440;">Integration Optimizer Wizard</span>
<svg class="b" style="left:2456px;top:275px;" width="26" height="26" viewBox="0 0 26 26"><path d="M3.3 2.7L22.6 22.3M22.6 2.7L3.3 22.3" stroke="#2b3440" stroke-width="1.7" fill="none"/></svg>
<div class="b" style="left:494px;top:312.3px;width:2008px;height:69.19999999999999px;background:#303a46;"></div>
<svg class="b" style="left:494px;top:312.3px;" width="2008" height="69.2" viewBox="0 0 2008 69.2"><path d="M0 3H1818V66.5H0Z" fill="#36414e"/><path d="M664.5 3H1323L1345 34.7L1323 66.5H664.5L686 34.7Z" fill="#037bc1"/><path d="M1323.8 3H2005.3V66.5H1323.8L1345.8 34.7Z" fill="#f0f5f9"/></svg>
<span class="t" style="left:664.60px;top:330.43px;font-size:29.5px;line-height:33.895px;color:#fff;transform:scaleX(0.9837);transform-origin:0 0;-webkit-text-stroke:0.35px #fff;">Characterize Chromatogram</span>
<span class="t" style="left:1383.00px;top:330.43px;font-size:29.5px;line-height:33.895px;color:#fff;transform:scaleX(1.0187);transform-origin:0 0;-webkit-text-stroke:0.35px #fff;">Integration &amp; Tuning</span>
<span class="t" style="left:2053.30px;top:330.43px;font-size:29.5px;line-height:33.895px;color:#c3c9ce;transform:scaleX(0.9671);transform-origin:0 0;-webkit-text-stroke:0.35px #c3c9ce;">Finalize Parameters</span>
<svg class="b" style="left:510px;top:399px;" width="36" height="36" viewBox="0 0 36 36"><circle cx="18" cy="17.7" r="14.2" fill="#fff" stroke="#1987d3" stroke-width="1.8"/><circle cx="18" cy="10.6" r="2.2" fill="#1987d3"/><path d="M18 14.6V25.6" stroke="#1987d3" stroke-width="3" fill="none"/></svg>
<span class="t" style="left:555.00px;top:398.87px;font-size:18.6px;line-height:21.371px;color:#1c1c1c;transform:scaleX(1.0471);transform-origin:0 0;-webkit-text-stroke:0.18px #1c1c1c;">Preview the results and tune the integration</span>
<span class="t" style="left:555.00px;top:420.62px;font-size:18.6px;line-height:21.371px;color:#1c1c1c;transform:scaleX(1.0336);transform-origin:0 0;-webkit-text-stroke:0.18px #1c1c1c;">of the peaks. Evaluate how the parameters</span>
<span class="t" style="left:555.00px;top:442.37px;font-size:18.6px;line-height:21.371px;color:#1c1c1c;transform:scaleX(1.0518);transform-origin:0 0;-webkit-text-stroke:0.18px #1c1c1c;">work with other data.</span>
<div class="b" style="left:968.3px;top:386.5px;width:1.7000000000000455px;height:398.5px;background:#e8eaec;"></div>
<span class="t" style="left:1000.60px;top:403.07px;font-size:18.6px;line-height:21.371px;color:#1c1c1c;transform:scaleX(0.9947);transform-origin:0 0;-webkit-text-stroke:0.18px #1c1c1c;">Integration Setup for signal: ECD1A</span>
<span class="t" style="left:1046.00px;top:488.27px;font-size:18.6px;line-height:21.371px;color:#1c1c1c;transform:scaleX(1.0144);transform-origin:0 0;-webkit-text-stroke:0.18px #1c1c1c;">Peak width</span>
<span class="t" style="left:999.80px;top:574.57px;font-size:18.6px;line-height:21.371px;color:#1c1c1c;transform:scaleX(1.0475);transform-origin:0 0;-webkit-text-stroke:0.18px #1c1c1c;">Slope sensitivity</span>
<span class="t" style="left:1032.00px;top:660.07px;font-size:18.6px;line-height:21.371px;color:#1c1c1c;transform:scaleX(1.0247);transform-origin:0 0;-webkit-text-stroke:0.18px #1c1c1c;">Height reject</span>
<span class="t" style="left:2028.30px;top:488.57px;font-size:18.6px;line-height:21.371px;color:#1c1c1c;transform:scaleX(1.0192);transform-origin:0 0;-webkit-text-stroke:0.18px #1c1c1c;">Peak separation mode</span>
<span class="t" style="left:2134.00px;top:660.27px;font-size:18.6px;line-height:21.371px;color:#1c1c1c;transform:scaleX(1.0159);transform-origin:0 0;-webkit-text-stroke:0.18px #1c1c1c;">Skim ratio</span>
<div class="b" style="left:1179.9px;top:496.2px;width:798.0999999999999px;height:6.5px;background:#8fd0ff;"></div>
<div class="b" style="left:1179.9px;top:496.2px;width:161.19999999999982px;height:6.5px;background:#0a7be4;"></div>
<svg class="b" style="left:1169.9px;top:489.4px;" width="818.0999999999999" height="20" viewBox="0 0 818.0999999999999 20"><circle cx="13.3" cy="10" r="2.6" fill="#fff"/><circle cx="66.0" cy="10" r="2.6" fill="#fff"/><circle cx="118.6" cy="10" r="2.6" fill="#fff"/><circle cx="224.0" cy="10" r="2.6" fill="#6c8296"/><circle cx="276.7" cy="10" r="2.6" fill="#6c8296"/><circle cx="329.3" cy="10" r="2.6" fill="#6c8296"/><circle cx="382.0" cy="10" r="2.6" fill="#6c8296"/><circle cx="434.7" cy="10" r="2.6" fill="#6c8296"/><circle cx="487.4" cy="10" r="2.6" fill="#6c8296"/><circle cx="540.0" cy="10" r="2.6" fill="#6c8296"/><circle cx="592.7" cy="10" r="2.6" fill="#6c8296"/><circle cx="645.4" cy="10" r="2.6" fill="#6c8296"/><circle cx="698.1" cy="10" r="2.6" fill="#6c8296"/><circle cx="750.7" cy="10" r="2.6" fill="#6c8296"/><circle cx="803.4" cy="10" r="2.6" fill="#6c8296"/><circle cx="171.2" cy="10" r="7.8" fill="#0a7be4"/><circle cx="171.2" cy="10" r="3" fill="#fff"/></svg>
<div class="b" style="left:1179.9px;top:582.0px;width:798.0999999999999px;height:6.5px;background:#8fd0ff;"></div>
<div class="b" style="left:1179.9px;top:582.0px;width:318.39999999999986px;height:6.5px;background:#0a7be4;"></div>
<svg class="b" style="left:1169.9px;top:575.2px;" width="818.0999999999999" height="20" viewBox="0 0 818.0999999999999 20"><circle cx="328.4" cy="10" r="7.8" fill="#0a7be4"/></svg>
<div class="b" style="left:1179.9px;top:668.0px;width:798.0999999999999px;height:6.5px;background:#8fd0ff;"></div>
<div class="b" style="left:1179.9px;top:668.0px;width:790.5999999999999px;height:6.5px;background:#0a7be4;"></div>
<svg class="b" style="left:1169.9px;top:661.2px;" width="818.0999999999999" height="20" viewBox="0 0 818.0999999999999 20"><circle cx="800.6" cy="10" r="7.8" fill="#0a7be4"/></svg>
<div class="b" style="left:2265.3px;top:668.0px;width:152.19999999999982px;height:6.5px;background:#8fd0ff;"></div>
<div class="b" style="left:2265.3px;top:668.0px;width:151.89999999999964px;height:6.5px;background:#0a7be4;"></div>
<svg class="b" style="left:2255.3px;top:661.2px;" width="172.19999999999982" height="20" viewBox="0 0 172.19999999999982 20"><circle cx="161.9" cy="10" r="7.8" fill="#0a7be4"/></svg>
<svg class="b" style="left:0px;top:0px;pointer-events:none;" width="2516" height="800" viewBox="0 0 2516 800"><path d="M1316.1 451.4H1366.9V480.2H1347.5L1341.5 484.8L1335.5 480.2H1316.1Z" fill="#fff" stroke="#9a9a9a" stroke-width="1.2"/></svg>
<span class="t" style="left:1325.00px;top:456.56px;font-size:16px;line-height:18.384px;color:#111;transform:scaleX(1.0276);transform-origin:0 0;-webkit-text-stroke:0.18px #111;">0.02</span>
<svg class="b" style="left:0px;top:0px;pointer-events:none;" width="2516" height="800" viewBox="0 0 2516 800"><path d="M1473.3999999999999 537.5H1524.2V566.3H1504.8L1498.8 570.9L1492.8 566.3H1473.3999999999999Z" fill="#fff" stroke="#9a9a9a" stroke-width="1.2"/></svg>
<span class="t" style="left:1482.50px;top:542.66px;font-size:16px;line-height:18.384px;color:#111;transform:scaleX(1.0276);transform-origin:0 0;-webkit-text-stroke:0.18px #111;">8.60</span>
<svg class="b" style="left:0px;top:0px;pointer-events:none;" width="2516" height="800" viewBox="0 0 2516 800"><path d="M1940.9 623.5H2001.1V652.3H1977L1971 656.9L1965 652.3H1940.9Z" fill="#fff" stroke="#9a9a9a" stroke-width="1.2"/></svg>
<span class="t" style="left:1950.50px;top:628.66px;font-size:16px;line-height:18.384px;color:#111;transform:scaleX(1.0240);transform-origin:0 0;-webkit-text-stroke:0.18px #111;">98.90</span>
<svg class="b" style="left:0px;top:0px;pointer-events:none;" width="2516" height="800" viewBox="0 0 2516 800"><path d="M2387.7000000000003 623.5H2447.9V652.3H2423.8L2417.8 656.9L2411.8 652.3H2387.7000000000003Z" fill="#fff" stroke="#9a9a9a" stroke-width="1.2"/></svg>
<span class="t" style="left:2397.30px;top:628.66px;font-size:16px;line-height:18.384px;color:#111;transform:scaleX(1.0240);transform-origin:0 0;-webkit-text-stroke:0.18px #111;">50.00</span>
<svg class="b" style="left:2273.4px;top:465.3px;" width="62.3" height="62.3" viewBox="0 0 62.3 62.3"><rect x="0.7" y="0.7" width="60.9" height="60.9" fill="#fff" stroke="#1b80e4" stroke-width="1.7"/><path d="M3.9 52.8H59" stroke="#8c8c8c" stroke-width="2.6"/><path d="M16.4 52.8C19.5 48 22 12 25.7 6.3C29 10 29.5 36 31.9 40C33.5 38 34.5 32.4 36.8 32.4C39.5 33 41 48 43.8 52.8" fill="none" stroke="#2a2a2a" stroke-width="1.6"/><path d="M12.7 46.8V52.8H46.2V46.8M31.9 40V52.8" stroke="#f33" stroke-width="1.7" fill="none"/></svg>
<svg class="b" style="left:2354.6px;top:465.3px;" width="62.3" height="62.3" viewBox="0 0 62.3 62.3"><rect x="0.7" y="0.7" width="60.9" height="60.9" fill="#fff" stroke="#1b80e4" stroke-width="1.7"/><path d="M3.9 52.8H59" stroke="#8c8c8c" stroke-width="2.6"/><path d="M16.4 52.8C19.5 48 22 12 25.7 6.3C29 10 29.5 36 31.9 40C33.5 38 34.5 32.4 36.8 32.4C39.5 33 41 48 43.8 52.8" fill="none" stroke="#2a2a2a" stroke-width="1.6"/><path d="M13.5 46.8V52.8L15.5 52.8L31 38.5 M31 34V42 M31.5 38.5L44.5 52.8H46.2V46.8" stroke="#f33" stroke-width="1.7" fill="none"/></svg>
<svg class="b" style="left:2273.4px;top:546.2px;" width="62.3" height="62.3" viewBox="0 0 62.3 62.3"><rect x="0.7" y="0.7" width="60.9" height="60.9" fill="#fff" stroke="#1b80e4" stroke-width="1.7"/><path d="M3.9 52.8H59" stroke="#8c8c8c" stroke-width="2.6"/><path d="M16.4 52.8C19.5 48 22 12 25.7 6.3C29 10 29.5 36 31.9 40C33.5 38 34.5 32.4 36.8 32.4C39.5 33 41 48 43.8 52.8" fill="none" stroke="#2a2a2a" stroke-width="1.6"/><path d="M14.5 46.8V52.8H46.2V46.8 M31.5 33.5C32 42 33.5 47.5 37 48.5C40 49.5 43 50 45.5 52" stroke="#f33" stroke-width="1.7" fill="none"/></svg>
<svg class="b" style="left:2354.6px;top:546.2px;" width="62.3" height="62.3" viewBox="0 0 62.3 62.3"><rect x="2.3" y="2.3" width="57.6" height="57.6" fill="#b9dcef" stroke="#0a78e0" stroke-width="4.6"/><path d="M4.6 52.3H57.6" stroke="#3a4550" stroke-width="1.2"/><path d="M16.4 52.8C19.5 48 22 12 25.7 6.3C29 10 29.5 36 31.9 40C33.5 38 34.5 32.4 36.8 32.4C39.5 33 41 48 43.8 52.8" fill="none" stroke="#2a2a2a" stroke-width="1.6"/><path d="M14.5 46.8V52.8H46.2V46.8 M31.3 34.5V41 M31.5 38.5L44.5 52.5" stroke="#f33" stroke-width="1.7" fill="none"/></svg>
<div class="b" style="left:2128.2px;top:729.2px;width:171.70000000000027px;height:43.0px;background:#d9eaf6;border:1.8px solid #a3aeb8;box-sizing:border-box;"></div>
<div class="b" style="left:2315.6px;top:729.2px;width:171.5999999999999px;height:43.0px;background:#d9eaf6;border:1.8px solid #a3aeb8;box-sizing:border-box;"></div>
<span class="t" style="left:2191.40px;top:738.57px;font-size:18.6px;line-height:21.371px;color:#1f2b3a;transform:scaleX(0.9659);transform-origin:0 0;-webkit-text-stroke:0.18px #1f2b3a;">Previous</span>
<span class="t" style="left:2371.00px;top:738.57px;font-size:18.6px;line-height:21.371px;color:#1f2b3a;transform:scaleX(0.9335);transform-origin:0 0;-webkit-text-stroke:0.18px #1f2b3a;">Next</span>
<svg class="b" style="left:2170px;top:739px;" width="14" height="22" viewBox="0 0 14 22"><path d="M11.6 2.5V19.5L3 11Z" fill="none" stroke="#1f2b3a" stroke-width="1.6"/></svg>
<svg class="b" style="left:2414px;top:739px;" width="14" height="22" viewBox="0 0 14 22"><path d="M2.5 2.5V19.5L11 11Z" fill="none" stroke="#1f2b3a" stroke-width="1.6"/></svg>
<div class="b" style="left:492.3px;top:802.2px;width:2012.5000000000002px;height:509.0px;background:#fff;border:1.8px solid #c5cacd;box-sizing:border-box;"></div>
<span class="t" style="left:515.30px;top:818.61px;font-size:33px;line-height:37.917px;color:#111;transform:scaleX(1.0385);transform-origin:0 0;-webkit-text-stroke:0.35px #111;">Chromatograms</span>
<svg class="b" style="left:2456px;top:829px;" width="26" height="26" viewBox="0 0 26 26"><path d="M3.3 2.7L22.6 22.3M22.6 2.7L3.3 22.3" stroke="#2b3440" stroke-width="1.7" fill="none"/></svg>
<svg class="b" style="left:0px;top:0px;" width="2516" height="910" viewBox="0 0 2516 910"><circle cx="530.3" cy="882.7" r="12.6" fill="none" stroke="#36414e" stroke-width="1.7"/><path d="M539.5 892.3L547 900 M521.5 882.7H539 M525.5 878.5L521.3 882.7L525.5 887 M535 878.5L539.2 882.7L535 887" fill="none" stroke="#36414e" stroke-width="1.7"/><path d="M560.4 868V899.7H593.7 M564.8 895.4L570.3 882.7L574.6 895.4H577.7L581.4 872.2 M587 872.2L590.6 895.4" fill="none" stroke="#36414e" stroke-width="1.7"/><path d="M575.2 870H591.5" stroke="#36414e" stroke-width="1.7" stroke-dasharray="2.4 2.2" fill="none"/><path d="M604 868V899.7H637.8 M608.5 895.4L615.3 881.5L621.4 895H637.8 M619.6 870H635.9V879H619.6Z" fill="none" stroke="#36414e" stroke-width="1.7"/><g fill="none" stroke="#36414e" stroke-width="1.7"><rect x="-8.6" y="-4.4" width="17.2" height="8.8" rx="4.4" transform="translate(701.2 874.3) rotate(-42)"/><rect x="-8.6" y="-4.4" width="17.2" height="8.8" rx="4.4" transform="translate(688.6 887.2) rotate(-42)"/><path d="M692 883.8L697.8 878"/><path d="M701.7 886L706.2 891L710.7 886M706.2 891V896"/></g><rect x="720.6" y="864.6" width="37.6" height="37" fill="#cce6f8"/><path d="M722.8 868V899.6H756.4 M725.6 890.7H734.2L740 870.4L746.5 890.7H755.1" fill="none" stroke="#36414e" stroke-width="1.7"/><path d="M728.4 884V890.7 M752 890.7V897" stroke="#36414e" stroke-width="3" fill="none"/><path d="M765 899.1H773.5C779.5 899.1 779.5 879 782.2 879C785 879 785 899.1 791 899.1H800.7" fill="none" stroke="#36414e" stroke-width="1.7"/><path d="M782.5 876.5L786.7 873" stroke="#36414e" stroke-width="1.5" stroke-dasharray="2.5 1.5"/><path d="M787.2 867.2H799 M787.2 870.2H799 M787.2 873.2H799" stroke="#36414e" stroke-width="1.5"/></svg>
<span class="t" style="left:844.50px;top:872.17px;font-size:18.6px;line-height:21.371px;color:#333;transform:scaleX(1.0223);transform-origin:0 0;-webkit-text-stroke:0.18px #333;">Display mode</span>
<div class="b" style="left:967.5px;top:867px;width:110.5px;height:32.60000000000002px;background:#fff;border:1.4px solid #b3babf;box-sizing:border-box;"></div>
<span class="t" style="left:973.70px;top:872.17px;font-size:18.6px;line-height:21.371px;color:#333;-webkit-text-stroke:0.18px #333;">Separate</span>
<svg class="b" style="left:1061px;top:879px;" width="12" height="9" viewBox="0 0 12 9"><path d="M1.7 1.4H10.3L6 7.2Z" fill="#2f3b49"/></svg>
<svg class="b" style="left:0px;top:0px;" width="2516" height="1300" viewBox="0 0 2516 1300"><path d="M654.4 946.4V1262.9" stroke="#dbdbdb" stroke-width="1.2"/><path d="M728.4 946.4V1262.9" stroke="#dbdbdb" stroke-width="1.2"/><path d="M802.5 946.4V1262.9" stroke="#dbdbdb" stroke-width="1.2"/><path d="M876.6 946.4V1262.9" stroke="#dbdbdb" stroke-width="1.2"/><path d="M950.7 946.4V1262.9" stroke="#dbdbdb" stroke-width="1.2"/><path d="M1024.8 946.4V1262.9" stroke="#dbdbdb" stroke-width="1.2"/><path d="M1098.8 946.4V1262.9" stroke="#dbdbdb" stroke-width="1.2"/><path d="M1172.9 946.4V1262.9" stroke="#dbdbdb" stroke-width="1.2"/><path d="M1247.0 946.4V1262.9" stroke="#dbdbdb" stroke-width="1.2"/><path d="M1321.0 946.4V1262.9" stroke="#dbdbdb" stroke-width="1.2"/><path d="M1395.1 946.4V1262.9" stroke="#dbdbdb" stroke-width="1.2"/><path d="M1469.2 946.4V1262.9" stroke="#dbdbdb" stroke-width="1.2"/><path d="M1543.3 946.4V1262.9" stroke="#dbdbdb" stroke-width="1.2"/><path d="M1617.3 946.4V1262.9" stroke="#dbdbdb" stroke-width="1.2"/><path d="M1691.4 946.4V1262.9" stroke="#dbdbdb" stroke-width="1.2"/><path d="M1765.5 946.4V1262.9" stroke="#dbdbdb" stroke-width="1.2"/><path d="M1839.6 946.4V1262.9" stroke="#dbdbdb" stroke-width="1.2"/><path d="M1913.7 946.4V1262.9" stroke="#dbdbdb" stroke-width="1.2"/><path d="M1987.7 946.4V1262.9" stroke="#dbdbdb" stroke-width="1.2"/><path d="M2061.8 946.4V1262.9" stroke="#dbdbdb" stroke-width="1.2"/><path d="M2135.9 946.4V1262.9" stroke="#dbdbdb" stroke-width="1.2"/><path d="M2209.9 946.4V1262.9" stroke="#dbdbdb" stroke-width="1.2"/><path d="M2284.0 946.4V1262.9" stroke="#dbdbdb" stroke-width="1.2"/><path d="M2358.1 946.4V1262.9" stroke="#dbdbdb" stroke-width="1.2"/><path d="M2432.2 946.4V1262.9" stroke="#dbdbdb" stroke-width="1.2"/><path d="M574 1212.6H2496.4" stroke="#dbdbdb" stroke-width="1.2"/><path d="M574 1157.8H2496.4" stroke="#dbdbdb" stroke-width="1.2"/><path d="M574 1103.1H2496.4" stroke="#dbdbdb" stroke-width="1.2"/><path d="M574 1048.3H2496.4" stroke="#dbdbdb" stroke-width="1.2"/><path d="M574 993.6H2496.4" stroke="#dbdbdb" stroke-width="1.2"/><path d="M577 1240.0H581" stroke="#dbdbdb" stroke-width="1.2"/><path d="M577 1185.2H581" stroke="#dbdbdb" stroke-width="1.2"/><path d="M577 1130.5H581" stroke="#dbdbdb" stroke-width="1.2"/><path d="M577 1075.7H581" stroke="#dbdbdb" stroke-width="1.2"/><path d="M577 1021.0H581" stroke="#dbdbdb" stroke-width="1.2"/><path d="M577 966.2H581" stroke="#dbdbdb" stroke-width="1.2"/><path d="M580.3 1262.9V1267.9" stroke="#cfcfcf" stroke-width="1.2"/><path d="M617.3 1262.9V1265.9" stroke="#cfcfcf" stroke-width="1.2"/><path d="M654.4 1262.9V1267.9" stroke="#cfcfcf" stroke-width="1.2"/><path d="M691.4 1262.9V1265.9" stroke="#cfcfcf" stroke-width="1.2"/><path d="M728.4 1262.9V1267.9" stroke="#cfcfcf" stroke-width="1.2"/><path d="M765.5 1262.9V1265.9" stroke="#cfcfcf" stroke-width="1.2"/><path d="M802.5 1262.9V1267.9" stroke="#cfcfcf" stroke-width="1.2"/><path d="M839.6 1262.9V1265.9" stroke="#cfcfcf" stroke-width="1.2"/><path d="M876.6 1262.9V1267.9" stroke="#cfcfcf" stroke-width="1.2"/><path d="M913.6 1262.9V1265.9" stroke="#cfcfcf" stroke-width="1.2"/><path d="M950.7 1262.9V1267.9" stroke="#cfcfcf" stroke-width="1.2"/><path d="M987.7 1262.9V1265.9" stroke="#cfcfcf" stroke-width="1.2"/><path d="M1024.8 1262.9V1267.9" stroke="#cfcfcf" stroke-width="1.2"/><path d="M1061.8 1262.9V1265.9" stroke="#cfcfcf" stroke-width="1.2"/><path d="M1098.8 1262.9V1267.9" stroke="#cfcfcf" stroke-width="1.2"/><path d="M1135.9 1262.9V1265.9" stroke="#cfcfcf" stroke-width="1.2"/><path d="M1172.9 1262.9V1267.9" stroke="#cfcfcf" stroke-width="1.2"/><path d="M1209.9 1262.9V1265.9" stroke="#cfcfcf" stroke-width="1.2"/><path d="M1247.0 1262.9V1267.9" stroke="#cfcfcf" stroke-width="1.2"/><path d="M1284.0 1262.9V1265.9" stroke="#cfcfcf" stroke-width="1.2"/><path d="M1321.0 1262.9V1267.9" stroke="#cfcfcf" stroke-width="1.2"/><path d="M1358.1 1262.9V1265.9" stroke="#cfcfcf" stroke-width="1.2"/><path d="M1395.1 1262.9V1267.9" stroke="#cfcfcf" stroke-width="1.2"/><path d="M1432.2 1262.9V1265.9" stroke="#cfcfcf" stroke-width="1.2"/><path d="M1469.2 1262.9V1267.9" stroke="#cfcfcf" stroke-width="1.2"/><path d="M1506.2 1262.9V1265.9" stroke="#cfcfcf" stroke-width="1.2"/><path d="M1543.3 1262.9V1267.9" stroke="#cfcfcf" stroke-width="1.2"/><path d="M1580.3 1262.9V1265.9" stroke="#cfcfcf" stroke-width="1.2"/><path d="M1617.3 1262.9V1267.9" stroke="#cfcfcf" stroke-width="1.2"/><path d="M1654.4 1262.9V1265.9" stroke="#cfcfcf" stroke-width="1.2"/><path d="M1691.4 1262.9V1267.9" stroke="#cfcfcf" stroke-width="1.2"/><path d="M1728.5 1262.9V1265.9" stroke="#cfcfcf" stroke-width="1.2"/><path d="M1765.5 1262.9V1267.9" stroke="#cfcfcf" stroke-width="1.2"/><path d="M1802.5 1262.9V1265.9" stroke="#cfcfcf" stroke-width="1.2"/><path d="M1839.6 1262.9V1267.9" stroke="#cfcfcf" stroke-width="1.2"/><path d="M1876.6 1262.9V1265.9" stroke="#cfcfcf" stroke-width="1.2"/><path d="M1913.7 1262.9V1267.9" stroke="#cfcfcf" stroke-width="1.2"/><path d="M1950.7 1262.9V1265.9" stroke="#cfcfcf" stroke-width="1.2"/><path d="M1987.7 1262.9V1267.9" stroke="#cfcfcf" stroke-width="1.2"/><path d="M2024.8 1262.9V1265.9" stroke="#cfcfcf" stroke-width="1.2"/><path d="M2061.8 1262.9V1267.9" stroke="#cfcfcf" stroke-width="1.2"/><path d="M2098.8 1262.9V1265.9" stroke="#cfcfcf" stroke-width="1.2"/><path d="M2135.9 1262.9V1267.9" stroke="#cfcfcf" stroke-width="1.2"/><path d="M2172.9 1262.9V1265.9" stroke="#cfcfcf" stroke-width="1.2"/><path d="M2209.9 1262.9V1267.9" stroke="#cfcfcf" stroke-width="1.2"/><path d="M2247.0 1262.9V1265.9" stroke="#cfcfcf" stroke-width="1.2"/><path d="M2284.0 1262.9V1267.9" stroke="#cfcfcf" stroke-width="1.2"/><path d="M2321.1 1262.9V1265.9" stroke="#cfcfcf" stroke-width="1.2"/><path d="M2358.1 1262.9V1267.9" stroke="#cfcfcf" stroke-width="1.2"/><path d="M2395.1 1262.9V1265.9" stroke="#cfcfcf" stroke-width="1.2"/><path d="M2432.2 1262.9V1267.9" stroke="#cfcfcf" stroke-width="1.2"/><path d="M2469.2 1262.9V1265.9" stroke="#cfcfcf" stroke-width="1.2"/><polyline points="581.5,1224.9 582.0,1226.3 582.5,1227.4 583.0,1228.2 583.5,1229.0 584.0,1229.6 584.5,1230.1 585.0,1230.5 585.5,1230.8 586.0,1231.1 586.5,1231.3 587.0,1231.5 587.5,1231.6 588.0,1231.7 588.5,1231.8 589.0,1231.9 589.5,1232.0 590.0,1232.3 590.5,1232.3 591.0,1232.3 591.5,1232.3 592.0,1232.3 592.5,1232.3 593.0,1232.3 593.5,1232.3 594.0,1232.3 594.5,1232.3 595.0,1232.3 595.5,1232.3 596.0,1232.3 596.5,1232.3 597.0,1232.3 597.5,1232.3 598.0,1232.3 598.5,1232.3 599.0,1232.3 599.5,1232.3 600.0,1232.3 600.5,1232.3 601.0,1232.2 601.5,1232.2 602.0,1232.2 602.5,1232.2 603.0,1233.1 603.5,1233.1 604.0,1233.1 604.5,1233.1 605.0,1233.1 605.5,1233.1 606.0,1233.1 606.5,1233.1 607.0,1233.1 607.5,1233.1 608.0,1233.1 608.5,1233.1 609.0,1233.1 609.5,1233.1 610.0,1233.0 610.5,1233.0 611.0,1232.9 611.5,1232.8 612.0,1232.7 612.5,1232.6 613.0,1232.4 613.5,1232.1 614.0,1231.9 614.5,1231.6 615.0,1231.3 615.5,1231.0 616.0,1230.7 616.5,1230.5 617.0,1230.3 617.5,1230.2 618.0,1230.1 618.5,1230.1 619.0,1230.3 619.5,1229.6 620.0,1229.8 620.5,1230.1 621.0,1230.4 621.5,1230.7 622.0,1231.0 622.5,1231.2 623.0,1231.4 623.5,1231.6 624.0,1231.8 624.5,1231.9 625.0,1232.0 625.5,1232.1 626.0,1232.1 626.5,1232.1 627.0,1232.2 627.5,1232.2 628.0,1232.2 628.5,1232.2 629.0,1232.2 629.5,1232.2 630.0,1232.2 630.5,1232.2 631.0,1232.2 631.5,1232.2 632.0,1232.2 632.5,1232.2 633.0,1232.2 633.5,1232.2 634.0,1232.2 634.5,1232.2 635.0,1232.2 635.5,1232.2 636.0,1232.2 636.5,1232.2 637.0,1232.2 637.5,1232.2 638.0,1232.2 638.5,1232.2 639.0,1232.2 639.5,1232.2 640.0,1232.2 640.5,1232.2 641.0,1232.2 641.5,1232.2 642.0,1232.2 642.5,1232.1 643.0,1232.1 643.5,1232.1 644.0,1232.1 644.5,1232.1 645.0,1232.1 645.5,1232.1 646.0,1232.1 646.5,1232.1 647.0,1232.1 647.5,1232.1 648.0,1232.1 648.5,1232.1 649.0,1232.1 649.5,1232.1 650.0,1232.1 650.5,1232.1 651.0,1232.1 651.5,1232.1 652.0,1232.1 652.5,1232.1 653.0,1232.1 653.5,1232.1 654.0,1232.1 654.5,1232.1 655.0,1232.1 655.5,1232.1 656.0,1232.1 656.5,1232.1 657.0,1232.1 657.5,1232.1 658.0,1232.1 658.5,1232.1 659.0,1232.1 659.5,1232.1 660.0,1232.1 660.5,1232.1 661.0,1232.1 661.5,1232.1 662.0,1232.1 662.5,1232.1 663.0,1232.1 663.5,1232.1 664.0,1232.1 664.5,1232.1 665.0,1232.1 665.5,1232.1 666.0,1232.1 666.5,1232.1 667.0,1232.1 667.5,1232.1 668.0,1232.1 668.5,1232.1 669.0,1232.1 669.5,1232.1 670.0,1232.1 670.5,1232.1 671.0,1232.1 671.5,1232.1 672.0,1232.1 672.5,1232.1 673.0,1232.1 673.5,1232.1 674.0,1232.1 674.5,1232.1 675.0,1232.1 675.5,1232.1 676.0,1232.1 676.5,1232.1 677.0,1232.1 677.5,1232.1 678.0,1232.1 678.5,1232.1 679.0,1233.0 679.5,1233.0 680.0,1233.0 680.5,1233.0 681.0,1233.0 681.5,1233.0 682.0,1233.0 682.5,1233.0 683.0,1233.0 683.5,1233.0 684.0,1232.9 684.5,1232.9 685.0,1232.9 685.5,1232.9 686.0,1232.9 686.5,1232.9 687.0,1232.9 687.5,1232.9 688.0,1232.9 688.5,1232.9 689.0,1232.9 689.5,1232.9 690.0,1232.9 690.5,1232.9 691.0,1232.9 691.5,1232.9 692.0,1232.0 692.5,1232.0 693.0,1232.0 693.5,1232.0 694.0,1232.0 694.5,1232.0 695.0,1232.0 695.5,1232.0 696.0,1232.0 696.5,1232.0 697.0,1232.0 697.5,1232.0 698.0,1232.0 698.5,1232.0 699.0,1232.0 699.5,1232.9 700.0,1232.9 700.5,1232.9 701.0,1232.9 701.5,1232.9 702.0,1232.9 702.5,1232.9 703.0,1232.9 703.5,1232.9 704.0,1232.9 704.5,1232.8 705.0,1232.8 705.5,1232.8 706.0,1232.8 706.5,1231.0 707.0,1231.0 707.5,1231.0 708.0,1231.0 708.5,1231.0 709.0,1231.0 709.5,1230.9 710.0,1230.9 710.5,1230.9 711.0,1230.9 711.5,1230.9 712.0,1230.9 712.5,1230.8 713.0,1230.8 713.5,1230.8 714.0,1230.8 714.5,1231.6 715.0,1231.6 715.5,1231.5 716.0,1231.5 716.5,1231.5 717.0,1231.4 717.5,1231.3 718.0,1231.3 718.5,1231.2 719.0,1231.1 719.5,1231.1 720.0,1231.0 720.5,1230.9 721.0,1230.8 721.5,1230.6 722.0,1230.5 722.5,1230.4 723.0,1230.2 723.5,1230.0 724.0,1229.8 724.5,1229.6 725.0,1229.4 725.5,1229.1 726.0,1228.8 726.5,1228.5 727.0,1228.1 727.5,1227.7 728.0,1227.2 728.5,1226.6 729.0,1225.9 729.5,1225.1 730.0,1224.1 730.5,1222.8 731.0,1221.3 731.5,1219.5 732.0,1217.2 732.5,1214.5 733.0,1211.1 733.5,1207.1 734.0,1202.2 734.5,1196.5 735.0,1189.7 735.5,1181.9 736.0,1173.0 736.5,1163.0 737.0,1151.9 737.5,1139.7 738.0,1126.6 738.5,1112.9 739.0,1098.6 739.5,1084.1 740.0,1069.6 740.5,1055.6 741.0,1042.2 741.5,1029.7 742.0,1018.5 742.5,1008.7 743.0,1000.3 743.5,1001.9 744.0,1010.5 744.5,1020.6 745.0,1032.1 745.5,1044.8 746.0,1058.3 746.5,1072.5 747.0,1087.0 747.5,1101.5 748.0,1115.6 748.5,1129.3 749.0,1142.2 749.5,1154.1 750.0,1165.0 750.5,1174.9 751.0,1183.5 751.5,1191.1 752.0,1197.6 752.5,1203.2 753.0,1207.9 753.5,1211.8 754.0,1215.0 754.5,1217.7 755.0,1219.8 755.5,1221.6 756.0,1223.0 756.5,1224.2 757.0,1225.2 757.5,1225.1 758.0,1225.8 758.5,1226.3 759.0,1226.8 759.5,1227.2 760.0,1227.6 760.5,1227.9 761.0,1228.2 761.5,1228.5 762.0,1228.7 762.5,1228.9 763.0,1229.1 763.5,1229.2 764.0,1229.4 764.5,1229.5 765.0,1229.7 765.5,1229.8 766.0,1229.9 766.5,1230.0 767.0,1230.1 767.5,1230.1 768.0,1231.1 768.5,1231.2 769.0,1231.2 769.5,1231.3 770.0,1231.3 770.5,1231.4 771.0,1231.4 771.5,1231.5 772.0,1231.5 772.5,1231.5 773.0,1231.5 773.5,1231.6 774.0,1231.6 774.5,1231.6 775.0,1231.6 775.5,1231.6 776.0,1231.7 776.5,1231.7 777.0,1231.7 777.5,1231.7 778.0,1231.7 778.5,1231.7 779.0,1231.7 779.5,1231.7 780.0,1231.7 780.5,1231.7 781.0,1231.8 781.5,1231.8 782.0,1231.8 782.5,1231.8 783.0,1231.8 783.5,1231.8 784.0,1231.8 784.5,1231.8 785.0,1231.8 785.5,1231.8 786.0,1231.8 786.5,1231.8 787.0,1231.8 787.5,1231.8 788.0,1231.8 788.5,1231.8 789.0,1231.8 789.5,1231.8 790.0,1231.8 790.5,1231.8 791.0,1231.8 791.5,1231.8 792.0,1231.8 792.5,1231.8 793.0,1231.8 793.5,1231.8 794.0,1231.8 794.5,1231.8 795.0,1231.8 795.5,1231.8 796.0,1231.8 796.5,1231.8 797.0,1231.8 797.5,1231.8 798.0,1231.8 798.5,1231.8 799.0,1231.8 799.5,1231.8 800.0,1231.8 800.5,1231.8 801.0,1231.8 801.5,1231.8 802.0,1231.8 802.5,1231.8 803.0,1231.8 803.5,1231.8 804.0,1231.8 804.5,1231.7 805.0,1231.7 805.5,1231.7 806.0,1231.7 806.5,1231.7 807.0,1231.7 807.5,1231.7 808.0,1231.7 808.5,1231.7 809.0,1231.7 809.5,1231.7 810.0,1231.7 810.5,1231.7 811.0,1231.7 811.5,1231.7 812.0,1231.7 812.5,1231.7 813.0,1231.7 813.5,1231.7 814.0,1231.7 814.5,1231.6 815.0,1231.6 815.5,1231.6 816.0,1231.6 816.5,1231.6 817.0,1231.6 817.5,1231.6 818.0,1231.5 818.5,1231.5 819.0,1231.5 819.5,1231.5 820.0,1231.5 820.5,1231.4 821.0,1231.4 821.5,1231.4 822.0,1231.3 822.5,1231.3 823.0,1231.2 823.5,1231.2 824.0,1231.1 824.5,1231.1 825.0,1231.0 825.5,1230.9 826.0,1230.8 826.5,1230.7 827.0,1230.6 827.5,1230.5 828.0,1230.3 828.5,1230.1 829.0,1229.9 829.5,1229.6 830.0,1229.3 830.5,1228.9 831.0,1228.3 831.5,1227.7 832.0,1226.9 832.5,1226.0 833.0,1224.8 833.5,1223.4 834.0,1221.7 834.5,1219.7 835.0,1217.3 835.5,1214.6 836.0,1211.6 836.5,1208.2 837.0,1204.6 837.5,1200.6 838.0,1196.5 838.5,1192.2 839.0,1187.9 839.5,1183.6 840.0,1179.6 840.5,1175.7 841.0,1172.3 841.5,1169.2 842.0,1166.6 842.5,1166.2 843.0,1168.7 843.5,1171.6 844.0,1175.0 844.5,1178.8 845.0,1182.8 845.5,1187.0 846.0,1191.3 846.5,1195.6 847.0,1199.8 847.5,1203.8 848.0,1207.5 848.5,1210.9 849.0,1214.0 849.5,1216.8 850.0,1219.2 850.5,1221.3 851.0,1223.0 851.5,1224.5 852.0,1225.7 852.5,1226.7 853.0,1227.5 853.5,1228.2 854.0,1228.7 854.5,1229.1 855.0,1229.5 855.5,1229.8 856.0,1230.0 856.5,1229.3 857.0,1229.5 857.5,1229.6 858.0,1229.7 858.5,1229.8 859.0,1229.9 859.5,1230.0 860.0,1230.1 860.5,1230.1 861.0,1230.2 861.5,1230.2 862.0,1230.3 862.5,1230.3 863.0,1230.3 863.5,1230.4 864.0,1230.4 864.5,1230.4 865.0,1230.5 865.5,1230.5 866.0,1230.5 866.5,1231.4 867.0,1231.4 867.5,1231.5 868.0,1231.5 868.5,1231.5 869.0,1231.5 869.5,1231.5 870.0,1231.5 870.5,1231.5 871.0,1231.5 871.5,1231.5 872.0,1231.5 872.5,1231.5 873.0,1231.5 873.5,1231.5 874.0,1231.6 874.5,1231.6 875.0,1231.6 875.5,1231.6 876.0,1231.6 876.5,1231.6 877.0,1231.6 877.5,1231.6 878.0,1231.6 878.5,1230.7 879.0,1230.7 879.5,1230.7 880.0,1230.7 880.5,1230.7 881.0,1230.7 881.5,1230.7 882.0,1230.7 882.5,1230.7 883.0,1230.7 883.5,1230.7 884.0,1230.7 884.5,1230.7 885.0,1230.7 885.5,1230.7 886.0,1230.7 886.5,1230.7 887.0,1230.7 887.5,1230.7 888.0,1230.7 888.5,1230.7 889.0,1230.7 889.5,1230.7 890.0,1230.7 890.5,1230.7 891.0,1230.7 891.5,1230.7 892.0,1230.6 892.5,1230.6 893.0,1230.6 893.5,1230.6 894.0,1230.6 894.5,1230.6 895.0,1230.6 895.5,1230.6 896.0,1230.6 896.5,1230.6 897.0,1230.6 897.5,1230.6 898.0,1230.6 898.5,1230.6 899.0,1230.6 899.5,1230.6 900.0,1230.6 900.5,1230.6 901.0,1230.6 901.5,1230.6 902.0,1230.6 902.5,1230.6 903.0,1231.5 903.5,1231.5 904.0,1231.5 904.5,1231.5 905.0,1231.5 905.5,1231.5 906.0,1231.5 906.5,1231.5 907.0,1231.4 907.5,1231.4 908.0,1231.3 908.5,1231.2 909.0,1231.1 909.5,1231.0 910.0,1230.8 910.5,1230.5 911.0,1230.3 911.5,1230.0 912.0,1229.7 912.5,1229.4 913.0,1229.1 913.5,1228.9 914.0,1228.7 914.5,1228.5 915.0,1228.5 915.5,1228.5 916.0,1228.7 916.5,1228.8 917.0,1228.2 917.5,1228.5 918.0,1228.8 918.5,1229.1 919.0,1229.4 919.5,1229.6 920.0,1229.8 920.5,1230.0 921.0,1230.2 921.5,1230.3 922.0,1230.4 922.5,1230.4 923.0,1230.5 923.5,1230.5 924.0,1230.5 924.5,1230.6 925.0,1230.6 925.5,1230.6 926.0,1230.6 926.5,1230.6 927.0,1230.6 927.5,1230.6 928.0,1230.6 928.5,1230.6 929.0,1230.6 929.5,1230.6 930.0,1231.5 930.5,1231.5 931.0,1231.5 931.5,1231.5 932.0,1231.5 932.5,1231.5 933.0,1231.5 933.5,1231.5 934.0,1231.5 934.5,1231.4 935.0,1231.4 935.5,1231.4 936.0,1231.4 936.5,1231.4 937.0,1231.4 937.5,1231.4 938.0,1231.4 938.5,1231.4 939.0,1231.4 939.5,1231.4 940.0,1231.4 940.5,1231.4 941.0,1231.4 941.5,1231.4 942.0,1231.4 942.5,1231.4 943.0,1231.4 943.5,1232.3 944.0,1232.3 944.5,1232.3 945.0,1232.3 945.5,1232.3 946.0,1232.3 946.5,1232.3 947.0,1232.3 947.5,1232.3 948.0,1232.3 948.5,1232.3 949.0,1232.3 949.5,1232.3 950.0,1232.3 950.5,1232.3 951.0,1232.3 951.5,1232.3 952.0,1232.3 952.5,1232.3 953.0,1232.3 953.5,1232.3 954.0,1232.3 954.5,1232.2 955.0,1232.2 955.5,1231.3 956.0,1231.2 956.5,1231.2 957.0,1231.1 957.5,1231.0 958.0,1231.0 958.5,1230.9 959.0,1230.7 959.5,1230.6 960.0,1230.5 960.5,1230.3 961.0,1230.2 961.5,1230.0 962.0,1229.9 962.5,1229.7 963.0,1229.6 963.5,1229.5 964.0,1229.4 964.5,1229.4 965.0,1229.4 965.5,1229.4 966.0,1229.4 966.5,1229.4 967.0,1229.5 967.5,1229.6 968.0,1229.7 968.5,1229.8 969.0,1229.8 969.5,1229.9 970.0,1229.9 970.5,1229.9 971.0,1229.8 971.5,1229.8 972.0,1229.6 972.5,1229.5 973.0,1229.3 973.5,1229.0 974.0,1228.8 974.5,1229.0 975.0,1228.7 975.5,1228.5 976.0,1228.3 976.5,1228.1 977.0,1227.9 977.5,1227.9 978.0,1227.8 978.5,1227.9 979.0,1228.0 979.5,1228.1 980.0,1228.3 980.5,1228.5 981.0,1228.8 981.5,1229.1 982.0,1229.4 982.5,1229.7 983.0,1230.0 983.5,1230.3 984.0,1230.5 984.5,1230.8 985.0,1231.0 985.5,1231.1 986.0,1231.3 986.5,1231.4 987.0,1231.5 987.5,1231.5 988.0,1231.6 988.5,1231.6 989.0,1231.6 989.5,1231.6 990.0,1231.6 990.5,1231.5 991.0,1231.4 991.5,1231.3 992.0,1231.1 992.5,1230.9 993.0,1230.2 993.5,1230.0 994.0,1229.7 994.5,1229.4 995.0,1229.0 995.5,1228.6 996.0,1228.3 996.5,1227.9 997.0,1227.5 997.5,1227.2 998.0,1226.9 998.5,1226.6 999.0,1226.4 999.5,1226.3 1000.0,1226.3 1000.5,1226.3 1001.0,1226.4 1001.5,1226.6 1002.0,1226.9 1002.5,1227.2 1003.0,1227.5 1003.5,1227.9 1004.0,1228.2 1004.5,1228.6 1005.0,1229.0 1005.5,1229.3 1006.0,1229.7 1006.5,1229.9 1007.0,1230.2 1007.5,1230.4 1008.0,1230.6 1008.5,1229.8 1009.0,1230.0 1009.5,1230.1 1010.0,1230.1 1010.5,1230.2 1011.0,1230.3 1011.5,1230.3 1012.0,1230.3 1012.5,1230.3 1013.0,1230.3 1013.5,1230.3 1014.0,1230.3 1014.5,1230.3 1015.0,1230.3 1015.5,1230.3 1016.0,1230.3 1016.5,1230.3 1017.0,1230.3 1017.5,1230.3 1018.0,1230.2 1018.5,1230.2 1019.0,1230.1 1019.5,1230.1 1020.0,1230.0 1020.5,1229.9 1021.0,1229.7 1021.5,1229.6 1022.0,1229.4 1022.5,1230.1 1023.0,1229.8 1023.5,1229.5 1024.0,1229.1 1024.5,1228.8 1025.0,1228.4 1025.5,1227.9 1026.0,1227.5 1026.5,1227.0 1027.0,1226.5 1027.5,1226.1 1028.0,1225.6 1028.5,1225.2 1029.0,1224.9 1029.5,1224.6 1030.0,1224.4 1030.5,1224.3 1031.0,1224.2 1031.5,1224.3 1032.0,1224.4 1032.5,1224.6 1033.0,1224.9 1033.5,1225.2 1034.0,1225.6 1034.5,1226.0 1035.0,1226.5 1035.5,1227.0 1036.0,1227.4 1036.5,1227.9 1037.0,1228.3 1037.5,1228.7 1038.0,1229.1 1038.5,1229.5 1039.0,1229.8 1039.5,1230.0 1040.0,1230.2 1040.5,1230.4 1041.0,1230.6 1041.5,1230.7 1042.0,1230.8 1042.5,1230.9 1043.0,1231.0 1043.5,1231.0 1044.0,1231.1 1044.5,1231.1 1045.0,1231.1 1045.5,1231.1 1046.0,1231.2 1046.5,1231.2 1047.0,1231.2 1047.5,1231.2 1048.0,1231.2 1048.5,1231.2 1049.0,1231.2 1049.5,1231.2 1050.0,1231.2 1050.5,1231.2 1051.0,1231.2 1051.5,1231.2 1052.0,1231.2 1052.5,1231.2 1053.0,1231.2 1053.5,1231.2 1054.0,1231.2 1054.5,1231.2 1055.0,1231.2 1055.5,1231.2 1056.0,1231.2 1056.5,1231.2 1057.0,1231.2 1057.5,1231.2 1058.0,1231.2 1058.5,1231.2 1059.0,1231.2 1059.5,1231.1 1060.0,1231.1 1060.5,1231.1 1061.0,1231.1 1061.5,1231.1 1062.0,1231.1 1062.5,1231.1 1063.0,1231.1 1063.5,1231.1 1064.0,1231.1 1064.5,1232.0 1065.0,1232.0 1065.5,1232.0 1066.0,1232.0 1066.5,1232.0 1067.0,1232.0 1067.5,1232.0 1068.0,1232.0 1068.5,1232.0 1069.0,1231.9 1069.5,1231.9 1070.0,1231.8 1070.5,1231.8 1071.0,1231.7 1071.5,1231.6 1072.0,1231.5 1072.5,1231.3 1073.0,1231.2 1073.5,1230.0 1074.0,1229.8 1074.5,1229.6 1075.0,1229.3 1075.5,1229.0 1076.0,1228.7 1076.5,1228.4 1077.0,1228.1 1077.5,1227.8 1078.0,1227.6 1078.5,1227.4 1079.0,1227.2 1079.5,1227.1 1080.0,1227.1 1080.5,1227.1 1081.0,1227.2 1081.5,1227.3 1082.0,1228.4 1082.5,1228.5 1083.0,1228.7 1083.5,1228.9 1084.0,1229.0 1084.5,1229.1 1085.0,1229.2 1085.5,1229.1 1086.0,1229.0 1086.5,1228.9 1087.0,1228.7 1087.5,1228.5 1088.0,1228.2 1088.5,1228.0 1089.0,1227.9 1089.5,1227.8 1090.0,1227.8 1090.5,1227.9 1091.0,1228.1 1091.5,1228.4 1092.0,1228.7 1092.5,1229.1 1093.0,1229.5 1093.5,1229.9 1094.0,1230.3 1094.5,1230.7 1095.0,1230.6 1095.5,1230.8 1096.0,1231.0 1096.5,1231.2 1097.0,1231.3 1097.5,1231.4 1098.0,1231.4 1098.5,1231.5 1099.0,1231.5 1099.5,1231.5 1100.0,1231.5 1100.5,1231.5 1101.0,1231.5 1101.5,1231.5 1102.0,1231.5 1102.5,1230.1 1103.0,1230.1 1103.5,1230.1 1104.0,1230.1 1104.5,1230.1 1105.0,1230.0 1105.5,1229.9 1106.0,1229.9 1106.5,1229.8 1107.0,1229.6 1107.5,1229.5 1108.0,1229.3 1108.5,1229.1 1109.0,1228.9 1109.5,1228.7 1110.0,1228.5 1110.5,1228.4 1111.0,1228.2 1111.5,1228.2 1112.0,1228.1 1112.5,1228.1 1113.0,1228.2 1113.5,1228.4 1114.0,1228.5 1114.5,1228.7 1115.0,1228.9 1115.5,1229.1 1116.0,1229.3 1116.5,1229.4 1117.0,1229.6 1117.5,1229.7 1118.0,1230.6 1118.5,1230.7 1119.0,1230.7 1119.5,1230.7 1120.0,1230.6 1120.5,1230.5 1121.0,1230.4 1121.5,1230.3 1122.0,1230.2 1122.5,1230.0 1123.0,1229.8 1123.5,1229.7 1124.0,1229.5 1124.5,1229.3 1125.0,1229.1 1125.5,1228.9 1126.0,1228.8 1126.5,1228.7 1127.0,1228.6 1127.5,1228.5 1128.0,1228.5 1128.5,1228.5 1129.0,1228.6 1129.5,1228.7 1130.0,1228.8 1130.5,1228.9 1131.0,1229.1 1131.5,1229.3 1132.0,1229.5 1132.5,1229.6 1133.0,1229.8 1133.5,1230.0 1134.0,1230.2 1134.5,1230.3 1135.0,1230.4 1135.5,1230.5 1136.0,1230.6 1136.5,1230.7 1137.0,1230.8 1137.5,1230.8 1138.0,1230.9 1138.5,1230.9 1139.0,1230.9 1139.5,1230.9 1140.0,1230.9 1140.5,1230.9 1141.0,1230.9 1141.5,1230.9 1142.0,1230.9 1142.5,1230.9 1143.0,1230.9 1143.5,1230.9 1144.0,1230.9 1144.5,1230.9 1145.0,1230.9 1145.5,1230.0 1146.0,1230.0 1146.5,1230.0 1147.0,1230.0 1147.5,1230.0 1148.0,1230.0 1148.5,1230.0 1149.0,1230.0 1149.5,1230.0 1150.0,1230.0 1150.5,1230.0 1151.0,1230.0 1151.5,1230.0 1152.0,1230.0 1152.5,1230.0 1153.0,1230.0 1153.5,1230.0 1154.0,1230.0 1154.5,1230.0 1155.0,1230.0 1155.5,1230.0 1156.0,1230.0 1156.5,1230.0 1157.0,1230.0 1157.5,1230.0 1158.0,1230.0 1158.5,1230.0 1159.0,1230.0 1159.5,1230.0 1160.0,1230.0 1160.5,1230.0 1161.0,1230.0 1161.5,1230.0 1162.0,1230.0 1162.5,1229.9 1163.0,1229.9 1163.5,1229.9 1164.0,1229.9 1164.5,1230.8 1165.0,1230.8 1165.5,1230.8 1166.0,1230.8 1166.5,1230.8 1167.0,1230.8 1167.5,1230.7 1168.0,1230.7 1168.5,1230.7 1169.0,1230.7 1169.5,1230.6 1170.0,1230.6 1170.5,1230.6 1171.0,1230.6 1171.5,1230.5 1172.0,1230.5 1172.5,1230.4 1173.0,1230.4 1173.5,1230.3 1174.0,1230.2 1174.5,1230.2 1175.0,1230.1 1175.5,1230.0 1176.0,1229.9 1176.5,1229.8 1177.0,1229.7 1177.5,1229.5 1178.0,1229.4 1178.5,1229.2 1179.0,1228.9 1179.5,1228.7 1180.0,1228.4 1180.5,1228.0 1181.0,1227.6 1181.5,1227.0 1182.0,1226.3 1182.5,1225.4 1183.0,1224.3 1183.5,1222.9 1184.0,1221.1 1184.5,1218.9 1185.0,1216.2 1185.5,1212.9 1186.0,1209.0 1186.5,1204.4 1187.0,1199.1 1187.5,1193.2 1188.0,1186.6 1188.5,1179.4 1189.0,1171.9 1189.5,1164.1 1190.0,1156.3 1190.5,1148.7 1191.0,1141.5 1191.5,1134.9 1192.0,1129.0 1192.5,1124.1 1193.0,1122.9 1193.5,1127.1 1194.0,1132.1 1194.5,1137.9 1195.0,1144.2 1195.5,1150.7 1196.0,1157.3 1196.5,1163.7 1197.0,1169.5 1197.5,1174.5 1198.0,1178.5 1198.5,1181.3 1199.0,1182.8 1199.5,1182.8 1200.0,1181.3 1200.5,1178.4 1201.0,1174.2 1201.5,1168.7 1202.0,1162.2 1202.5,1154.8 1203.0,1147.0 1203.5,1139.0 1204.0,1131.1 1204.5,1123.6 1205.0,1116.7 1205.5,1110.7 1206.0,1105.7 1206.5,1106.9 1207.0,1112.7 1207.5,1119.4 1208.0,1127.0 1208.5,1135.4 1209.0,1144.2 1209.5,1153.3 1210.0,1162.3 1210.5,1171.1 1211.0,1179.4 1211.5,1187.1 1212.0,1194.0 1212.5,1200.2 1213.0,1205.5 1213.5,1210.0 1214.0,1213.8 1214.5,1217.0 1215.0,1219.5 1215.5,1221.6 1216.0,1223.2 1216.5,1224.5 1217.0,1225.5 1217.5,1226.3 1218.0,1227.0 1218.5,1227.5 1219.0,1227.9 1219.5,1228.3 1220.0,1228.6 1220.5,1229.3 1221.0,1229.5 1221.5,1229.7 1222.0,1229.9 1222.5,1230.0 1223.0,1230.1 1223.5,1230.3 1224.0,1230.4 1224.5,1230.5 1225.0,1230.5 1225.5,1230.6 1226.0,1230.7 1226.5,1230.7 1227.0,1230.8 1227.5,1230.8 1228.0,1230.9 1228.5,1230.9 1229.0,1230.9 1229.5,1231.0 1230.0,1231.0 1230.5,1231.0 1231.0,1231.0 1231.5,1231.1 1232.0,1231.1 1232.5,1231.1 1233.0,1231.1 1233.5,1231.1 1234.0,1231.1 1234.5,1231.1 1235.0,1231.1 1235.5,1231.2 1236.0,1231.2 1236.5,1231.2 1237.0,1231.2 1237.5,1231.2 1238.0,1231.2 1238.5,1231.2 1239.0,1231.2 1239.5,1231.2 1240.0,1231.2 1240.5,1231.2 1241.0,1231.2 1241.5,1231.2 1242.0,1231.2 1242.5,1231.2 1243.0,1231.2 1243.5,1231.2 1244.0,1231.2 1244.5,1231.2 1245.0,1231.2 1245.5,1231.2 1246.0,1231.2 1246.5,1231.2 1247.0,1231.2 1247.5,1231.2 1248.0,1231.2 1248.5,1231.2 1249.0,1231.2 1249.5,1231.2 1250.0,1231.2 1250.5,1231.2 1251.0,1231.2 1251.5,1231.2 1252.0,1231.2 1252.5,1231.2 1253.0,1231.2 1253.5,1231.2 1254.0,1231.2 1254.5,1231.2 1255.0,1231.2 1255.5,1231.2 1256.0,1231.2 1256.5,1231.2 1257.0,1231.2 1257.5,1231.2 1258.0,1230.7 1258.5,1230.7 1259.0,1230.7 1259.5,1230.7 1260.0,1230.7 1260.5,1230.6 1261.0,1230.6 1261.5,1230.6 1262.0,1230.6 1262.5,1230.6 1263.0,1230.5 1263.5,1230.5 1264.0,1230.4 1264.5,1230.3 1265.0,1230.2 1265.5,1230.1 1266.0,1230.0 1266.5,1229.9 1267.0,1229.7 1267.5,1229.5 1268.0,1229.3 1268.5,1229.1 1269.0,1228.8 1269.5,1228.6 1270.0,1228.4 1270.5,1228.2 1271.0,1228.0 1271.5,1227.8 1272.0,1227.7 1272.5,1227.7 1273.0,1227.6 1273.5,1227.7 1274.0,1227.7 1274.5,1227.8 1275.0,1228.0 1275.5,1228.7 1276.0,1228.9 1276.5,1229.1 1277.0,1229.3 1277.5,1229.5 1278.0,1229.8 1278.5,1230.0 1279.0,1230.1 1279.5,1230.3 1280.0,1230.5 1280.5,1230.6 1281.0,1230.7 1281.5,1230.8 1282.0,1230.9 1282.5,1230.9 1283.0,1231.0 1283.5,1231.0 1284.0,1231.0 1284.5,1231.1 1285.0,1231.1 1285.5,1231.1 1286.0,1231.1 1286.5,1231.1 1287.0,1231.1 1287.5,1231.5 1288.0,1231.5 1288.5,1231.5 1289.0,1231.5 1289.5,1231.5 1290.0,1231.5 1290.5,1231.5 1291.0,1231.5 1291.5,1231.5 1292.0,1231.5 1292.5,1231.5 1293.0,1231.5 1293.5,1231.5 1294.0,1231.5 1294.5,1231.5 1295.0,1231.5 1295.5,1231.5 1296.0,1231.5 1296.5,1231.5 1297.0,1231.5 1297.5,1231.5 1298.0,1231.5 1298.5,1231.4 1299.0,1231.4 1299.5,1229.6 1300.0,1229.6 1300.5,1229.6 1301.0,1229.5 1301.5,1229.5 1302.0,1229.4 1302.5,1229.3 1303.0,1229.2 1303.5,1229.1 1304.0,1229.0 1304.5,1228.9 1305.0,1228.7 1305.5,1228.6 1306.0,1228.4 1306.5,1228.3 1307.0,1228.1 1307.5,1228.9 1308.0,1228.8 1308.5,1228.7 1309.0,1228.6 1309.5,1228.6 1310.0,1228.5 1310.5,1228.6 1311.0,1228.6 1311.5,1228.7 1312.0,1228.8 1312.5,1228.9 1313.0,1229.0 1313.5,1229.2 1314.0,1229.3 1314.5,1229.5 1315.0,1229.6 1315.5,1229.8 1316.0,1229.9 1316.5,1230.0 1317.0,1230.1 1317.5,1230.2 1318.0,1230.3 1318.5,1230.3 1319.0,1230.4 1319.5,1230.4 1320.0,1230.4 1320.5,1230.5 1321.0,1230.5 1321.5,1230.5 1322.0,1230.5 1322.5,1230.5 1323.0,1230.5 1323.5,1230.5 1324.0,1230.5 1324.5,1230.5 1325.0,1230.5 1325.5,1230.5 1326.0,1230.5 1326.5,1230.5 1327.0,1230.5 1327.5,1230.5 1328.0,1230.5 1328.5,1230.5 1329.0,1230.5 1329.5,1230.5 1330.0,1230.5 1330.5,1230.5 1331.0,1230.5 1331.5,1230.5 1332.0,1230.5 1332.5,1230.5 1333.0,1230.5 1333.5,1230.5 1334.0,1230.5 1334.5,1230.5 1335.0,1230.5 1335.5,1230.5 1336.0,1230.5 1336.5,1230.5 1337.0,1230.5 1337.5,1230.5 1338.0,1231.4 1338.5,1231.4 1339.0,1231.4 1339.5,1231.4 1340.0,1231.4 1340.5,1231.4 1341.0,1231.4 1341.5,1231.4 1342.0,1231.3 1342.5,1231.3 1343.0,1231.3 1343.5,1231.3 1344.0,1231.2 1344.5,1231.2 1345.0,1231.1 1345.5,1231.0 1346.0,1230.9 1346.5,1230.7 1347.0,1230.5 1347.5,1230.3 1348.0,1230.1 1348.5,1229.8 1349.0,1229.4 1349.5,1229.0 1350.0,1228.6 1350.5,1228.2 1351.0,1227.7 1351.5,1227.3 1352.0,1226.8 1352.5,1226.4 1353.0,1226.0 1353.5,1225.8 1354.0,1225.5 1354.5,1225.4 1355.0,1225.3 1355.5,1225.4 1356.0,1225.5 1356.5,1225.7 1357.0,1226.0 1357.5,1226.4 1358.0,1225.9 1358.5,1226.3 1359.0,1226.8 1359.5,1227.2 1360.0,1227.7 1360.5,1228.1 1361.0,1228.5 1361.5,1228.8 1362.0,1229.1 1362.5,1229.4 1363.0,1229.6 1363.5,1229.8 1364.0,1229.9 1364.5,1230.1 1365.0,1230.2 1365.5,1230.2 1366.0,1230.3 1366.5,1230.3 1367.0,1230.3 1367.5,1230.4 1368.0,1230.4 1368.5,1230.4 1369.0,1230.4 1369.5,1230.4 1370.0,1230.4 1370.5,1230.4 1371.0,1230.4 1371.5,1230.4 1372.0,1230.4 1372.5,1230.4 1373.0,1230.4 1373.5,1230.4 1374.0,1230.4 1374.5,1230.4 1375.0,1230.4 1375.5,1230.4 1376.0,1230.4 1376.5,1230.3 1377.0,1230.3 1377.5,1230.3 1378.0,1230.3 1378.5,1231.1 1379.0,1231.1 1379.5,1231.0 1380.0,1231.0 1380.5,1230.9 1381.0,1230.8 1381.5,1230.7 1382.0,1230.6 1382.5,1230.4 1383.0,1230.3 1383.5,1230.1 1384.0,1230.0 1384.5,1229.8 1385.0,1229.6 1385.5,1229.4 1386.0,1229.1 1386.5,1228.9 1387.0,1228.7 1387.5,1228.5 1388.0,1228.3 1388.5,1228.2 1389.0,1228.0 1389.5,1227.9 1390.0,1227.8 1390.5,1227.8 1391.0,1227.8 1391.5,1227.8 1392.0,1227.8 1392.5,1227.9 1393.0,1228.0 1393.5,1228.2 1394.0,1228.3 1394.5,1228.5 1395.0,1228.7 1395.5,1228.9 1396.0,1229.1 1396.5,1229.3 1397.0,1229.5 1397.5,1229.7 1398.0,1229.9 1398.5,1229.2 1399.0,1229.4 1399.5,1229.5 1400.0,1229.6 1400.5,1229.8 1401.0,1229.9 1401.5,1229.9 1402.0,1230.0 1402.5,1230.1 1403.0,1230.1 1403.5,1230.2 1404.0,1230.2 1404.5,1230.2 1405.0,1230.2 1405.5,1230.3 1406.0,1230.3 1406.5,1230.3 1407.0,1230.3 1407.5,1230.3 1408.0,1230.3 1408.5,1230.3 1409.0,1230.3 1409.5,1230.2 1410.0,1230.2 1410.5,1230.2 1411.0,1230.1 1411.5,1230.1 1412.0,1230.0 1412.5,1230.0 1413.0,1229.9 1413.5,1229.8 1414.0,1229.6 1414.5,1229.5 1415.0,1229.4 1415.5,1229.2 1416.0,1229.1 1416.5,1228.9 1417.0,1228.8 1417.5,1228.6 1418.0,1228.5 1418.5,1228.4 1419.0,1228.3 1419.5,1228.3 1420.0,1228.3 1420.5,1228.3 1421.0,1228.3 1421.5,1228.4 1422.0,1228.5 1422.5,1228.6 1423.0,1228.8 1423.5,1228.9 1424.0,1229.1 1424.5,1229.2 1425.0,1229.4 1425.5,1229.5 1426.0,1229.6 1426.5,1229.7 1427.0,1229.8 1427.5,1229.9 1428.0,1230.0 1428.5,1230.1 1429.0,1230.1 1429.5,1230.1 1430.0,1230.2 1430.5,1230.2 1431.0,1230.2 1431.5,1230.2 1432.0,1230.2 1432.5,1230.2 1433.0,1231.1 1433.5,1231.1 1434.0,1231.1 1434.5,1231.1 1435.0,1231.1 1435.5,1231.1 1436.0,1231.1 1436.5,1231.1 1437.0,1231.1 1437.5,1231.1 1438.0,1231.1 1438.5,1231.1 1439.0,1231.1 1439.5,1231.1 1440.0,1231.1 1440.5,1231.1 1441.0,1231.1 1441.5,1231.1 1442.0,1231.1 1442.5,1231.1 1443.0,1231.1 1443.5,1231.1 1444.0,1231.1 1444.5,1231.1 1445.0,1231.1 1445.5,1231.1 1446.0,1231.1 1446.5,1231.1 1447.0,1231.1 1447.5,1231.1 1448.0,1231.1 1448.5,1231.1 1449.0,1231.1 1449.5,1231.1 1450.0,1231.1 1450.5,1231.1 1451.0,1231.1 1451.5,1231.1 1452.0,1231.1 1452.5,1231.1 1453.0,1231.1 1453.5,1231.1 1454.0,1231.1 1454.5,1230.2 1455.0,1230.2 1455.5,1230.2 1456.0,1230.1 1456.5,1230.1 1457.0,1230.1 1457.5,1230.1 1458.0,1230.1 1458.5,1230.1 1459.0,1230.1 1459.5,1230.1 1460.0,1230.0 1460.5,1230.0 1461.0,1230.0 1461.5,1230.0 1462.0,1229.9 1462.5,1229.9 1463.0,1229.9 1463.5,1229.8 1464.0,1229.8 1464.5,1229.7 1465.0,1229.7 1465.5,1229.6 1466.0,1229.5 1466.5,1229.5 1467.0,1229.4 1467.5,1229.3 1468.0,1229.2 1468.5,1229.1 1469.0,1229.0 1469.5,1228.8 1470.0,1228.7 1470.5,1228.5 1471.0,1228.4 1471.5,1228.2 1472.0,1228.1 1472.5,1227.9 1473.0,1227.7 1473.5,1227.5 1474.0,1227.2 1474.5,1227.0 1475.0,1226.8 1475.5,1226.5 1476.0,1226.2 1476.5,1225.9 1477.0,1225.6 1477.5,1225.2 1478.0,1224.8 1478.5,1224.3 1479.0,1223.7 1479.5,1223.0 1480.0,1222.2 1480.5,1221.2 1481.0,1220.0 1481.5,1218.6 1482.0,1216.9 1482.5,1214.9 1483.0,1212.5 1483.5,1209.6 1484.0,1206.4 1484.5,1202.7 1485.0,1198.6 1485.5,1194.1 1486.0,1189.1 1486.5,1183.9 1487.0,1178.4 1487.5,1172.8 1488.0,1167.2 1488.5,1161.6 1489.0,1156.3 1489.5,1151.4 1490.0,1146.9 1490.5,1143.0 1491.0,1139.7 1491.5,1139.2 1492.0,1142.6 1492.5,1146.6 1493.0,1151.2 1493.5,1156.3 1494.0,1161.7 1494.5,1167.4 1495.0,1173.2 1495.5,1179.0 1496.0,1184.7 1496.5,1190.1 1497.0,1195.3 1497.5,1200.0 1498.0,1204.3 1498.5,1208.2 1499.0,1211.6 1499.5,1214.6 1500.0,1217.1 1500.5,1219.3 1501.0,1221.1 1501.5,1222.6 1502.0,1223.8 1502.5,1224.8 1503.0,1225.6 1503.5,1226.3 1504.0,1226.8 1504.5,1227.2 1505.0,1227.6 1505.5,1228.8 1506.0,1229.0 1506.5,1229.3 1507.0,1229.4 1507.5,1229.6 1508.0,1229.7 1508.5,1229.9 1509.0,1228.2 1509.5,1228.3 1510.0,1228.3 1510.5,1228.4 1511.0,1228.5 1511.5,1228.5 1512.0,1228.6 1512.5,1228.6 1513.0,1228.7 1513.5,1228.7 1514.0,1228.8 1514.5,1228.8 1515.0,1228.8 1515.5,1228.9 1516.0,1228.9 1516.5,1228.9 1517.0,1228.9 1517.5,1229.0 1518.0,1229.0 1518.5,1229.0 1519.0,1229.0 1519.5,1229.0 1520.0,1229.0 1520.5,1229.0 1521.0,1229.0 1521.5,1229.0 1522.0,1229.1 1522.5,1229.1 1523.0,1229.1 1523.5,1229.1 1524.0,1229.1 1524.5,1230.0 1525.0,1230.0 1525.5,1230.0 1526.0,1230.0 1526.5,1230.0 1527.0,1230.0 1527.5,1230.0 1528.0,1230.0 1528.5,1230.0 1529.0,1230.0 1529.5,1230.0 1530.0,1230.0 1530.5,1230.0 1531.0,1230.0 1531.5,1230.0 1532.0,1230.0 1532.5,1230.0 1533.0,1230.0 1533.5,1230.0 1534.0,1230.0 1534.5,1230.0 1535.0,1230.0 1535.5,1230.0 1536.0,1230.0 1536.5,1230.0 1537.0,1230.0 1537.5,1230.0 1538.0,1230.0 1538.5,1230.0 1539.0,1230.0 1539.5,1230.0 1540.0,1230.0 1540.5,1230.0 1541.0,1230.0 1541.5,1230.0 1542.0,1229.1 1542.5,1229.1 1543.0,1229.1 1543.5,1229.1 1544.0,1229.1 1544.5,1229.1 1545.0,1229.1 1545.5,1229.1 1546.0,1229.1 1546.5,1229.1 1547.0,1229.1 1547.5,1229.1 1548.0,1229.1 1548.5,1229.1 1549.0,1229.1 1549.5,1229.1 1550.0,1229.1 1550.5,1229.1 1551.0,1229.1 1551.5,1229.1 1552.0,1229.1 1552.5,1229.1 1553.0,1229.1 1553.5,1229.1 1554.0,1229.1 1554.5,1229.1 1555.0,1229.1 1555.5,1229.1 1556.0,1229.1 1556.5,1229.1 1557.0,1229.1 1557.5,1229.1 1558.0,1229.1 1558.5,1229.1 1559.0,1229.1 1559.5,1229.0 1560.0,1229.0 1560.5,1229.0 1561.0,1229.0 1561.5,1229.0 1562.0,1229.0 1562.5,1229.0 1563.0,1229.0 1563.5,1230.4 1564.0,1230.4 1564.5,1230.4 1565.0,1230.4 1565.5,1230.4 1566.0,1230.4 1566.5,1230.4 1567.0,1230.4 1567.5,1230.4 1568.0,1230.4 1568.5,1230.4 1569.0,1230.4 1569.5,1230.4 1570.0,1230.4 1570.5,1230.4 1571.0,1230.4 1571.5,1230.4 1572.0,1230.4 1572.5,1230.4 1573.0,1230.4 1573.5,1230.4 1574.0,1230.4 1574.5,1230.4 1575.0,1230.4 1575.5,1230.4 1576.0,1230.4 1576.5,1230.4 1577.0,1230.4 1577.5,1230.4 1578.0,1230.4 1578.5,1230.4 1579.0,1230.4 1579.5,1230.4 1580.0,1230.4 1580.5,1229.9 1581.0,1229.9 1581.5,1229.9 1582.0,1229.9 1582.5,1229.9 1583.0,1229.9 1583.5,1229.8 1584.0,1229.8 1584.5,1229.8 1585.0,1229.8 1585.5,1229.7 1586.0,1229.6 1586.5,1229.6 1587.0,1229.5 1587.5,1229.4 1588.0,1229.2 1588.5,1229.1 1589.0,1228.9 1589.5,1228.7 1590.0,1228.5 1590.5,1228.3 1591.0,1228.1 1591.5,1227.8 1592.0,1227.6 1592.5,1227.4 1593.0,1227.2 1593.5,1227.1 1594.0,1227.5 1594.5,1227.4 1595.0,1227.4 1595.5,1227.4 1596.0,1227.5 1596.5,1227.6 1597.0,1227.7 1597.5,1227.9 1598.0,1228.1 1598.5,1228.3 1599.0,1228.5 1599.5,1228.8 1600.0,1229.0 1600.5,1229.2 1601.0,1229.4 1601.5,1229.5 1602.0,1229.7 1602.5,1229.8 1603.0,1229.9 1603.5,1230.0 1604.0,1230.1 1604.5,1230.2 1605.0,1230.2 1605.5,1230.2 1606.0,1230.3 1606.5,1230.3 1607.0,1230.3 1607.5,1230.3 1608.0,1230.3 1608.5,1230.3 1609.0,1230.3 1609.5,1230.3 1610.0,1230.3 1610.5,1230.3 1611.0,1230.3 1611.5,1230.3 1612.0,1230.3 1612.5,1230.3 1613.0,1230.7 1613.5,1230.7 1614.0,1230.7 1614.5,1230.7 1615.0,1230.7 1615.5,1230.7 1616.0,1230.7 1616.5,1230.7 1617.0,1230.7 1617.5,1230.7 1618.0,1230.7 1618.5,1230.7 1619.0,1230.7 1619.5,1230.7 1620.0,1230.7 1620.5,1230.7 1621.0,1230.7 1621.5,1230.7 1622.0,1230.7 1622.5,1230.7 1623.0,1230.7 1623.5,1230.7 1624.0,1230.7 1624.5,1230.7 1625.0,1230.7 1625.5,1230.7 1626.0,1230.7 1626.5,1230.7 1627.0,1230.7 1627.5,1230.7 1628.0,1230.7 1628.5,1230.7 1629.0,1230.7 1629.5,1230.7 1630.0,1230.7 1630.5,1230.7 1631.0,1230.7 1631.5,1230.7 1632.0,1230.6 1632.5,1230.6 1633.0,1230.6 1633.5,1230.2 1634.0,1230.2 1634.5,1230.2 1635.0,1230.2 1635.5,1230.2 1636.0,1230.2 1636.5,1230.2 1637.0,1230.2 1637.5,1230.2 1638.0,1230.2 1638.5,1230.1 1639.0,1230.1 1639.5,1230.1 1640.0,1230.1 1640.5,1230.1 1641.0,1230.0 1641.5,1230.0 1642.0,1230.0 1642.5,1229.9 1643.0,1229.9 1643.5,1229.8 1644.0,1229.8 1644.5,1229.7 1645.0,1229.7 1645.5,1229.6 1646.0,1229.0 1646.5,1228.9 1647.0,1228.8 1647.5,1228.7 1648.0,1228.6 1648.5,1228.5 1649.0,1228.4 1649.5,1228.3 1650.0,1228.1 1650.5,1227.9 1651.0,1227.8 1651.5,1227.6 1652.0,1227.4 1652.5,1227.2 1653.0,1226.9 1653.5,1226.7 1654.0,1226.4 1654.5,1226.1 1655.0,1225.8 1655.5,1225.4 1656.0,1225.0 1656.5,1224.5 1657.0,1224.0 1657.5,1223.3 1658.0,1222.6 1658.5,1221.7 1659.0,1220.5 1659.5,1219.2 1660.0,1217.6 1660.5,1215.6 1661.0,1213.3 1661.5,1210.4 1662.0,1207.1 1662.5,1203.3 1663.0,1198.9 1663.5,1193.9 1664.0,1188.3 1664.5,1182.2 1665.0,1175.5 1665.5,1168.5 1666.0,1161.2 1666.5,1153.7 1667.0,1146.3 1667.5,1139.0 1668.0,1132.0 1668.5,1125.6 1669.0,1119.8 1669.5,1114.7 1670.0,1110.5 1670.5,1111.4 1671.0,1116.0 1671.5,1121.4 1672.0,1127.5 1672.5,1134.2 1673.0,1141.4 1673.5,1148.9 1674.0,1156.5 1674.5,1164.1 1675.0,1171.5 1675.5,1178.6 1676.0,1185.3 1676.5,1191.4 1677.0,1196.9 1677.5,1201.9 1678.0,1206.2 1678.5,1210.0 1679.0,1213.2 1679.5,1216.0 1680.0,1218.2 1680.5,1220.1 1681.0,1221.7 1681.5,1222.9 1682.0,1223.9 1682.5,1224.8 1683.0,1225.5 1683.5,1226.0 1684.0,1226.5 1684.5,1226.9 1685.0,1227.2 1685.5,1227.4 1686.0,1227.7 1686.5,1227.0 1687.0,1227.1 1687.5,1227.3 1688.0,1227.4 1688.5,1227.6 1689.0,1227.7 1689.5,1227.8 1690.0,1227.9 1690.5,1227.9 1691.0,1228.0 1691.5,1228.1 1692.0,1228.1 1692.5,1228.2 1693.0,1228.2 1693.5,1228.3 1694.0,1228.3 1694.5,1228.4 1695.0,1229.3 1695.5,1229.3 1696.0,1229.3 1696.5,1229.4 1697.0,1229.4 1697.5,1229.4 1698.0,1229.4 1698.5,1229.4 1699.0,1229.5 1699.5,1229.5 1700.0,1229.5 1700.5,1229.5 1701.0,1229.5 1701.5,1229.5 1702.0,1229.5 1702.5,1229.5 1703.0,1229.5 1703.5,1229.5 1704.0,1229.5 1704.5,1229.5 1705.0,1229.5 1705.5,1229.6 1706.0,1229.6 1706.5,1229.6 1707.0,1229.6 1707.5,1229.6 1708.0,1229.6 1708.5,1229.6 1709.0,1229.6 1709.5,1229.6 1710.0,1229.6 1710.5,1229.6 1711.0,1229.6 1711.5,1229.6 1712.0,1229.6 1712.5,1229.6 1713.0,1229.6 1713.5,1229.6 1714.0,1229.6 1714.5,1229.6 1715.0,1229.6 1715.5,1229.6 1716.0,1229.6 1716.5,1228.7 1717.0,1228.7 1717.5,1228.7 1718.0,1228.7 1718.5,1228.7 1719.0,1228.7 1719.5,1228.7 1720.0,1228.7 1720.5,1228.7 1721.0,1228.7 1721.5,1228.7 1722.0,1228.7 1722.5,1228.7 1723.0,1229.6 1723.5,1229.6 1724.0,1229.6 1724.5,1229.6 1725.0,1229.6 1725.5,1229.5 1726.0,1229.5 1726.5,1229.5 1727.0,1229.5 1727.5,1229.5 1728.0,1229.5 1728.5,1229.5 1729.0,1229.5 1729.5,1229.5 1730.0,1229.5 1730.5,1229.5 1731.0,1229.5 1731.5,1229.5 1732.0,1229.5 1732.5,1229.5 1733.0,1229.5 1733.5,1229.5 1734.0,1229.5 1734.5,1229.5 1735.0,1229.5 1735.5,1229.5 1736.0,1229.5 1736.5,1229.5 1737.0,1229.5 1737.5,1229.5 1738.0,1229.5 1738.5,1229.5 1739.0,1229.5 1739.5,1229.5 1740.0,1229.5 1740.5,1229.5 1741.0,1229.5 1741.5,1229.5 1742.0,1229.5 1742.5,1229.5 1743.0,1229.5 1743.5,1229.5 1744.0,1229.5 1744.5,1229.5 1745.0,1229.5 1745.5,1229.5 1746.0,1229.5 1746.5,1229.5 1747.0,1229.5 1747.5,1229.5 1748.0,1229.5 1748.5,1229.5 1749.0,1229.5 1749.5,1229.5 1750.0,1229.5 1750.5,1229.5 1751.0,1229.5 1751.5,1229.5 1752.0,1229.5 1752.5,1229.5 1753.0,1229.5 1753.5,1229.5 1754.0,1229.5 1754.5,1229.5 1755.0,1229.5 1755.5,1229.5 1756.0,1229.5 1756.5,1229.5 1757.0,1229.5 1757.5,1229.5 1758.0,1229.5 1758.5,1229.5 1759.0,1229.5 1759.5,1229.5 1760.0,1229.5 1760.5,1229.5 1761.0,1229.5 1761.5,1229.5 1762.0,1229.5 1762.5,1229.5 1763.0,1229.5 1763.5,1229.5 1764.0,1229.5 1764.5,1229.5 1765.0,1229.5 1765.5,1229.5 1766.0,1229.5 1766.5,1229.5 1767.0,1229.5 1767.5,1229.5 1768.0,1229.4 1768.5,1229.4 1769.0,1229.4 1769.5,1229.4 1770.0,1229.4 1770.5,1229.4 1771.0,1229.4 1771.5,1230.3 1772.0,1230.3 1772.5,1230.3 1773.0,1230.3 1773.5,1230.3 1774.0,1230.3 1774.5,1230.3 1775.0,1230.3 1775.5,1230.3 1776.0,1230.3 1776.5,1230.3 1777.0,1230.3 1777.5,1230.3 1778.0,1230.3 1778.5,1230.3 1779.0,1230.3 1779.5,1230.3 1780.0,1230.3 1780.5,1230.3 1781.0,1230.3 1781.5,1230.3 1782.0,1230.3 1782.5,1230.3 1783.0,1230.3 1783.5,1230.3 1784.0,1230.3 1784.5,1230.3 1785.0,1230.3 1785.5,1230.3 1786.0,1230.3 1786.5,1230.3 1787.0,1230.3 1787.5,1230.3 1788.0,1230.3 1788.5,1230.3 1789.0,1230.3 1789.5,1230.3 1790.0,1230.3 1790.5,1230.3 1791.0,1230.3 1791.5,1230.3 1792.0,1230.3 1792.5,1230.3 1793.0,1230.3 1793.5,1230.3 1794.0,1230.3 1794.5,1230.3 1795.0,1230.3 1795.5,1230.3 1796.0,1230.3 1796.5,1230.3 1797.0,1230.3 1797.5,1230.3 1798.0,1230.3 1798.5,1230.3 1799.0,1230.3 1799.5,1230.3 1800.0,1230.3 1800.5,1230.3 1801.0,1230.3 1801.5,1230.3 1802.0,1230.3 1802.5,1230.3 1803.0,1230.3 1803.5,1230.3 1804.0,1230.3 1804.5,1230.3 1805.0,1230.3 1805.5,1230.3 1806.0,1230.3 1806.5,1230.3 1807.0,1230.3 1807.5,1230.3 1808.0,1230.3 1808.5,1230.3 1809.0,1230.3 1809.5,1230.2 1810.0,1230.2 1810.5,1230.2 1811.0,1230.2 1811.5,1230.2 1812.0,1230.2 1812.5,1230.2 1813.0,1230.2 1813.5,1230.2 1814.0,1230.2 1814.5,1230.2 1815.0,1230.2 1815.5,1229.3 1816.0,1229.3 1816.5,1229.3 1817.0,1229.3 1817.5,1229.3 1818.0,1229.2 1818.5,1229.2 1819.0,1229.2 1819.5,1229.1 1820.0,1229.0 1820.5,1229.0 1821.0,1228.9 1821.5,1228.8 1822.0,1228.6 1822.5,1228.5 1823.0,1228.3 1823.5,1228.1 1824.0,1227.9 1824.5,1227.7 1825.0,1227.4 1825.5,1227.2 1826.0,1226.9 1826.5,1226.6 1827.0,1226.3 1827.5,1226.0 1828.0,1225.7 1828.5,1225.4 1829.0,1225.1 1829.5,1224.9 1830.0,1224.7 1830.5,1224.5 1831.0,1224.4 1831.5,1224.3 1832.0,1224.3 1832.5,1224.3 1833.0,1224.4 1833.5,1224.5 1834.0,1224.7 1834.5,1224.9 1835.0,1225.1 1835.5,1225.4 1836.0,1225.7 1836.5,1225.9 1837.0,1226.3 1837.5,1226.6 1838.0,1226.8 1838.5,1227.1 1839.0,1227.4 1839.5,1227.7 1840.0,1227.9 1840.5,1228.1 1841.0,1228.8 1841.5,1228.9 1842.0,1229.1 1842.5,1229.2 1843.0,1229.3 1843.5,1229.4 1844.0,1229.5 1844.5,1229.5 1845.0,1229.5 1845.5,1229.5 1846.0,1229.5 1846.5,1229.5 1847.0,1229.4 1847.5,1229.3 1848.0,1229.2 1848.5,1229.1 1849.0,1228.9 1849.5,1228.7 1850.0,1228.5 1850.5,1228.3 1851.0,1228.1 1851.5,1228.0 1852.0,1227.9 1852.5,1227.8 1853.0,1227.7 1853.5,1227.8 1854.0,1227.9 1854.5,1228.0 1855.0,1228.1 1855.5,1228.3 1856.0,1228.5 1856.5,1228.7 1857.0,1228.9 1857.5,1229.1 1858.0,1229.2 1858.5,1229.4 1859.0,1229.5 1859.5,1229.5 1860.0,1229.6 1860.5,1229.1 1861.0,1229.2 1861.5,1229.2 1862.0,1229.2 1862.5,1229.2 1863.0,1229.2 1863.5,1229.2 1864.0,1229.2 1864.5,1229.2 1865.0,1229.2 1865.5,1229.2 1866.0,1229.2 1866.5,1229.2 1867.0,1229.2 1867.5,1229.2 1868.0,1229.2 1868.5,1229.2 1869.0,1229.2 1869.5,1229.2 1870.0,1228.3 1870.5,1228.3 1871.0,1228.3 1871.5,1228.3 1872.0,1228.3 1872.5,1228.3 1873.0,1228.3 1873.5,1228.3 1874.0,1228.3 1874.5,1228.3 1875.0,1228.3 1875.5,1228.3 1876.0,1228.3 1876.5,1228.3 1877.0,1228.3 1877.5,1228.3 1878.0,1228.3 1878.5,1228.3 1879.0,1228.3 1879.5,1228.3 1880.0,1228.3 1880.5,1228.3 1881.0,1228.3 1881.5,1228.2 1882.0,1229.6 1882.5,1229.6 1883.0,1229.6 1883.5,1229.5 1884.0,1229.5 1884.5,1229.4 1885.0,1229.3 1885.5,1229.2 1886.0,1229.0 1886.5,1228.9 1887.0,1228.8 1887.5,1228.6 1888.0,1228.5 1888.5,1228.3 1889.0,1228.2 1889.5,1228.2 1890.0,1228.2 1890.5,1228.2 1891.0,1228.2 1891.5,1228.3 1892.0,1228.5 1892.5,1228.6 1893.0,1228.7 1893.5,1228.9 1894.0,1229.0 1894.5,1229.2 1895.0,1229.3 1895.5,1229.4 1896.0,1229.4 1896.5,1229.5 1897.0,1229.0 1897.5,1229.1 1898.0,1229.1 1898.5,1229.1 1899.0,1229.1 1899.5,1229.1 1900.0,1229.1 1900.5,1229.1 1901.0,1229.1 1901.5,1229.1 1902.0,1229.1 1902.5,1229.1 1903.0,1229.1 1903.5,1229.1 1904.0,1229.1 1904.5,1229.1 1905.0,1229.1 1905.5,1229.1 1906.0,1229.1 1906.5,1229.1 1907.0,1229.1 1907.5,1229.1 1908.0,1229.1 1908.5,1229.1 1909.0,1229.1 1909.5,1229.1 1910.0,1229.1 1910.5,1229.1 1911.0,1229.1 1911.5,1229.1 1912.0,1229.1 1912.5,1229.1 1913.0,1229.1 1913.5,1229.1 1914.0,1229.1 1914.5,1229.1 1915.0,1229.1 1915.5,1229.1 1916.0,1229.1 1916.5,1229.1 1917.0,1229.1 1917.5,1229.1 1918.0,1229.1 1918.5,1229.1 1919.0,1229.1 1919.5,1229.1 1920.0,1229.1 1920.5,1229.1 1921.0,1229.1 1921.5,1229.1 1922.0,1229.1 1922.5,1229.1 1923.0,1229.1 1923.5,1229.1 1924.0,1229.1 1924.5,1229.1 1925.0,1229.1 1925.5,1229.1 1926.0,1229.1 1926.5,1229.1 1927.0,1229.1 1927.5,1229.1 1928.0,1229.1 1928.5,1229.1 1929.0,1229.1 1929.5,1229.1 1930.0,1229.1 1930.5,1229.1 1931.0,1229.1 1931.5,1229.1 1932.0,1229.1 1932.5,1229.1 1933.0,1229.1 1933.5,1229.1 1934.0,1229.1 1934.5,1229.0 1935.0,1229.0 1935.5,1229.0 1936.0,1229.0 1936.5,1229.0 1937.0,1229.0 1937.5,1229.0 1938.0,1229.0 1938.5,1229.0 1939.0,1229.0 1939.5,1229.0 1940.0,1229.0 1940.5,1229.0 1941.0,1229.0 1941.5,1229.0 1942.0,1229.0 1942.5,1229.0 1943.0,1229.0 1943.5,1229.0 1944.0,1229.0 1944.5,1229.0 1945.0,1229.0 1945.5,1229.0 1946.0,1229.0 1946.5,1229.0 1947.0,1229.0 1947.5,1229.0 1948.0,1229.0 1948.5,1229.0 1949.0,1229.0 1949.5,1229.0 1950.0,1229.0 1950.5,1229.0 1951.0,1229.0 1951.5,1229.0 1952.0,1229.0 1952.5,1229.0 1953.0,1229.0 1953.5,1229.0 1954.0,1229.0 1954.5,1229.0 1955.0,1229.0 1955.5,1229.0 1956.0,1229.0 1956.5,1229.0 1957.0,1229.0 1957.5,1229.0 1958.0,1229.0 1958.5,1229.0 1959.0,1229.0 1959.5,1229.0 1960.0,1229.0 1960.5,1229.0 1961.0,1229.0 1961.5,1229.0 1962.0,1229.0 1962.5,1229.0 1963.0,1229.0 1963.5,1229.0 1964.0,1229.0 1964.5,1229.0 1965.0,1229.0 1965.5,1229.0 1966.0,1229.0 1966.5,1229.0 1967.0,1229.0 1967.5,1229.0 1968.0,1229.0 1968.5,1229.0 1969.0,1229.0 1969.5,1229.0 1970.0,1229.0 1970.5,1228.9 1971.0,1228.9 1971.5,1228.9 1972.0,1228.8 1972.5,1228.7 1973.0,1228.6 1973.5,1228.4 1974.0,1228.1 1974.5,1227.8 1975.0,1227.5 1975.5,1227.2 1976.0,1227.0 1976.5,1227.0 1977.0,1227.0 1977.5,1227.1 1978.0,1227.4 1978.5,1227.7 1979.0,1228.0 1979.5,1228.2 1980.0,1228.5 1980.5,1228.6 1981.0,1228.8 1981.5,1228.8 1982.0,1228.9 1982.5,1228.9 1983.0,1228.9 1983.5,1228.9 1984.0,1228.9 1984.5,1228.9 1985.0,1228.9 1985.5,1228.9 1986.0,1228.9 1986.5,1228.9 1987.0,1228.9 1987.5,1228.9 1988.0,1228.9 1988.5,1228.9 1989.0,1228.9 1989.5,1228.9 1990.0,1228.9 1990.5,1228.9 1991.0,1228.9 1991.5,1228.9 1992.0,1228.9 1992.5,1228.9 1993.0,1228.9 1993.5,1228.9 1994.0,1228.9 1994.5,1228.9 1995.0,1228.9 1995.5,1228.9 1996.0,1228.9 1996.5,1228.0 1997.0,1228.0 1997.5,1228.0 1998.0,1228.0 1998.5,1228.0 1999.0,1228.0 1999.5,1228.0 2000.0,1228.0 2000.5,1228.0 2001.0,1228.0 2001.5,1228.0 2002.0,1228.0 2002.5,1228.0 2003.0,1228.0 2003.5,1228.0 2004.0,1228.0 2004.5,1228.0 2005.0,1228.0 2005.5,1228.0 2006.0,1228.0 2006.5,1228.0 2007.0,1228.0 2007.5,1228.0 2008.0,1228.9 2008.5,1228.9 2009.0,1228.9 2009.5,1228.9 2010.0,1228.9 2010.5,1228.9 2011.0,1228.9 2011.5,1228.9 2012.0,1228.9 2012.5,1228.9 2013.0,1228.9 2013.5,1228.9 2014.0,1228.9 2014.5,1228.9 2015.0,1228.9 2015.5,1228.8 2016.0,1228.8 2016.5,1228.8 2017.0,1228.8 2017.5,1228.7 2018.0,1228.6 2018.5,1228.5 2019.0,1228.4 2019.5,1228.2 2020.0,1227.9 2020.5,1227.7 2021.0,1227.5 2021.5,1227.4 2022.0,1227.3 2022.5,1227.4 2023.0,1227.5 2023.5,1227.7 2024.0,1227.9 2024.5,1228.1 2025.0,1228.3 2025.5,1228.5 2026.0,1228.6 2026.5,1228.7 2027.0,1228.8 2027.5,1228.8 2028.0,1228.8 2028.5,1228.8 2029.0,1228.8 2029.5,1228.8 2030.0,1228.8 2030.5,1228.8 2031.0,1228.8 2031.5,1228.8 2032.0,1228.8 2032.5,1228.8 2033.0,1228.8 2033.5,1228.8 2034.0,1228.8 2034.5,1228.8 2035.0,1228.8 2035.5,1228.8 2036.0,1228.8 2036.5,1228.8 2037.0,1228.8 2037.5,1228.8 2038.0,1228.8 2038.5,1228.8 2039.0,1228.8 2039.5,1228.8 2040.0,1228.8 2040.5,1228.8 2041.0,1228.8 2041.5,1228.8 2042.0,1228.8 2042.5,1228.8 2043.0,1229.7 2043.5,1229.7 2044.0,1229.7 2044.5,1229.7 2045.0,1229.7 2045.5,1229.7 2046.0,1229.7 2046.5,1229.7 2047.0,1229.7 2047.5,1229.7 2048.0,1229.7 2048.5,1229.7 2049.0,1229.7 2049.5,1229.7 2050.0,1229.7 2050.5,1229.7 2051.0,1229.7 2051.5,1229.7 2052.0,1229.7 2052.5,1229.7 2053.0,1229.7 2053.5,1229.7 2054.0,1229.7 2054.5,1229.7 2055.0,1229.7 2055.5,1229.7 2056.0,1229.7 2056.5,1229.7 2057.0,1229.7 2057.5,1229.7 2058.0,1229.7 2058.5,1229.7 2059.0,1229.7 2059.5,1229.6 2060.0,1229.6 2060.5,1229.6 2061.0,1228.7 2061.5,1228.7 2062.0,1228.7 2062.5,1228.7 2063.0,1228.7 2063.5,1228.7 2064.0,1228.7 2064.5,1228.7 2065.0,1228.7 2065.5,1228.7 2066.0,1228.7 2066.5,1228.7 2067.0,1228.7 2067.5,1228.7 2068.0,1228.7 2068.5,1228.7 2069.0,1228.7 2069.5,1228.7 2070.0,1228.7 2070.5,1229.6 2071.0,1229.6 2071.5,1229.6 2072.0,1229.6 2072.5,1229.6 2073.0,1229.6 2073.5,1229.6 2074.0,1229.6 2074.5,1229.6 2075.0,1229.6 2075.5,1229.6 2076.0,1229.6 2076.5,1229.6 2077.0,1229.6 2077.5,1229.6 2078.0,1229.6 2078.5,1229.6 2079.0,1229.6 2079.5,1229.6 2080.0,1229.6 2080.5,1229.6 2081.0,1229.6 2081.5,1229.6 2082.0,1229.6 2082.5,1228.7 2083.0,1228.7 2083.5,1228.7 2084.0,1228.7 2084.5,1228.7 2085.0,1228.7 2085.5,1228.7 2086.0,1228.7 2086.5,1228.7 2087.0,1228.7 2087.5,1228.7 2088.0,1228.7 2088.5,1228.7 2089.0,1228.7 2089.5,1228.7 2090.0,1228.7 2090.5,1228.7 2091.0,1228.7 2091.5,1228.7 2092.0,1228.7 2092.5,1228.7 2093.0,1228.7 2093.5,1228.7 2094.0,1228.7 2094.5,1228.7 2095.0,1228.7 2095.5,1228.7 2096.0,1228.7 2096.5,1228.7 2097.0,1228.7 2097.5,1228.7 2098.0,1228.7 2098.5,1228.7 2099.0,1228.7 2099.5,1228.7 2100.0,1228.7 2100.5,1228.7 2101.0,1228.6 2101.5,1228.6 2102.0,1228.6 2102.5,1228.6 2103.0,1228.6 2103.5,1228.6 2104.0,1228.6 2104.5,1228.6 2105.0,1228.6 2105.5,1228.6 2106.0,1228.6 2106.5,1228.6 2107.0,1228.6 2107.5,1228.6 2108.0,1228.6 2108.5,1228.6 2109.0,1228.6 2109.5,1228.6 2110.0,1228.6 2110.5,1228.6 2111.0,1228.6 2111.5,1228.6 2112.0,1228.6 2112.5,1228.6 2113.0,1228.6 2113.5,1228.6 2114.0,1228.6 2114.5,1228.6 2115.0,1228.6 2115.5,1228.6 2116.0,1228.6 2116.5,1228.6 2117.0,1228.6 2117.5,1228.6 2118.0,1228.6 2118.5,1228.6 2119.0,1228.6 2119.5,1228.6 2120.0,1228.6 2120.5,1228.6 2121.0,1228.6 2121.5,1228.6 2122.0,1228.6 2122.5,1228.6 2123.0,1228.6 2123.5,1228.6 2124.0,1228.6 2124.5,1228.6 2125.0,1228.6 2125.5,1228.6 2126.0,1228.6 2126.5,1228.6 2127.0,1228.6 2127.5,1228.6 2128.0,1228.6 2128.5,1228.6 2129.0,1228.6 2129.5,1228.6 2130.0,1228.6 2130.5,1228.6 2131.0,1228.6 2131.5,1228.6 2132.0,1228.6 2132.5,1228.6 2133.0,1228.6 2133.5,1228.6 2134.0,1228.6 2134.5,1228.6 2135.0,1228.6 2135.5,1228.6 2136.0,1228.6 2136.5,1228.6 2137.0,1228.6 2137.5,1228.6 2138.0,1228.6 2138.5,1228.6 2139.0,1228.6 2139.5,1228.6 2140.0,1228.6 2140.5,1228.6 2141.0,1228.6 2141.5,1228.6 2142.0,1228.6 2142.5,1228.5 2143.0,1228.5 2143.5,1228.5 2144.0,1228.5 2144.5,1228.5 2145.0,1228.5 2145.5,1228.5 2146.0,1228.5 2146.5,1228.5 2147.0,1228.5 2147.5,1228.5 2148.0,1228.5 2148.5,1228.5 2149.0,1228.5 2149.5,1229.0 2150.0,1229.0 2150.5,1229.0 2151.0,1229.0 2151.5,1229.0 2152.0,1229.0 2152.5,1229.0 2153.0,1229.0 2153.5,1229.0 2154.0,1229.0 2154.5,1229.0 2155.0,1229.0 2155.5,1229.0 2156.0,1229.0 2156.5,1229.0 2157.0,1229.0 2157.5,1229.0 2158.0,1229.0 2158.5,1229.0 2159.0,1229.0 2159.5,1229.0 2160.0,1229.0 2160.5,1229.0 2161.0,1229.0 2161.5,1229.0 2162.0,1229.0 2162.5,1229.0 2163.0,1229.0 2163.5,1229.0 2164.0,1229.0 2164.5,1229.0 2165.0,1229.0 2165.5,1229.0 2166.0,1229.0 2166.5,1229.0 2167.0,1229.0 2167.5,1229.0 2168.0,1229.0 2168.5,1229.0 2169.0,1229.0 2169.5,1229.0 2170.0,1229.0 2170.5,1229.0 2171.0,1229.0 2171.5,1228.5 2172.0,1228.5 2172.5,1228.5 2173.0,1228.5 2173.5,1228.5 2174.0,1228.5 2174.5,1228.5 2175.0,1228.5 2175.5,1228.5 2176.0,1228.5 2176.5,1228.5 2177.0,1228.5 2177.5,1228.5 2178.0,1228.5 2178.5,1228.5 2179.0,1228.5 2179.5,1228.5 2180.0,1228.5 2180.5,1228.5 2181.0,1228.5 2181.5,1228.5 2182.0,1228.5 2182.5,1228.5 2183.0,1228.5 2183.5,1228.5 2184.0,1228.5 2184.5,1228.4 2185.0,1228.4 2185.5,1228.4 2186.0,1228.4 2186.5,1228.4 2187.0,1228.4 2187.5,1228.4 2188.0,1228.4 2188.5,1228.4 2189.0,1228.4 2189.5,1228.4 2190.0,1228.4 2190.5,1228.4 2191.0,1228.4 2191.5,1228.4 2192.0,1228.4 2192.5,1228.4 2193.0,1228.4 2193.5,1228.4 2194.0,1228.4 2194.5,1228.4 2195.0,1228.4 2195.5,1228.4 2196.0,1228.4 2196.5,1228.4 2197.0,1228.4 2197.5,1228.4 2198.0,1228.4 2198.5,1228.4 2199.0,1228.4 2199.5,1228.4 2200.0,1228.4 2200.5,1229.3 2201.0,1229.3 2201.5,1229.3 2202.0,1229.3 2202.5,1229.3 2203.0,1229.3 2203.5,1229.3 2204.0,1229.3 2204.5,1229.3 2205.0,1229.3 2205.5,1229.3 2206.0,1229.3 2206.5,1229.3 2207.0,1229.3 2207.5,1229.3 2208.0,1229.3 2208.5,1229.3 2209.0,1229.3 2209.5,1229.3 2210.0,1229.3 2210.5,1229.3 2211.0,1229.3 2211.5,1229.3 2212.0,1229.3 2212.5,1229.3 2213.0,1229.3 2213.5,1229.3 2214.0,1229.3 2214.5,1229.3 2215.0,1229.3 2215.5,1229.3 2216.0,1229.3 2216.5,1227.5 2217.0,1227.5 2217.5,1227.5 2218.0,1227.5 2218.5,1227.5 2219.0,1227.5 2219.5,1227.5 2220.0,1227.5 2220.5,1227.5 2221.0,1227.4 2221.5,1227.4 2222.0,1227.4 2222.5,1227.4 2223.0,1227.4 2223.5,1227.4 2224.0,1227.4 2224.5,1227.4 2225.0,1227.4 2225.5,1227.4 2226.0,1227.4 2226.5,1227.4 2227.0,1227.4 2227.5,1227.4 2228.0,1227.3 2228.5,1227.3 2229.0,1227.3 2229.5,1227.3 2230.0,1227.3 2230.5,1227.2 2231.0,1227.2 2231.5,1227.2 2232.0,1227.2 2232.5,1227.1 2233.0,1227.1 2233.5,1227.0 2234.0,1227.0 2234.5,1227.0 2235.0,1226.9 2235.5,1226.8 2236.0,1228.6 2236.5,1228.5 2237.0,1228.5 2237.5,1228.4 2238.0,1228.3 2238.5,1228.3 2239.0,1228.2 2239.5,1228.1 2240.0,1228.0 2240.5,1228.0 2241.0,1227.9 2241.5,1227.8 2242.0,1227.7 2242.5,1227.6 2243.0,1227.5 2243.5,1227.4 2244.0,1227.3 2244.5,1227.2 2245.0,1227.1 2245.5,1227.0 2246.0,1226.9 2246.5,1226.8 2247.0,1226.7 2247.5,1226.6 2248.0,1226.5 2248.5,1226.4 2249.0,1226.3 2249.5,1226.2 2250.0,1226.1 2250.5,1226.0 2251.0,1225.9 2251.5,1225.7 2252.0,1225.6 2252.5,1225.5 2253.0,1225.4 2253.5,1225.2 2254.0,1225.1 2254.5,1225.0 2255.0,1224.8 2255.5,1224.7 2256.0,1224.5 2256.5,1224.4 2257.0,1223.3 2257.5,1223.1 2258.0,1222.9 2258.5,1222.7 2259.0,1222.5 2259.5,1222.2 2260.0,1222.0 2260.5,1221.7 2261.0,1221.4 2261.5,1221.0 2262.0,1220.6 2262.5,1220.1 2263.0,1219.5 2263.5,1218.8 2264.0,1217.9 2264.5,1216.8 2265.0,1215.5 2265.5,1213.9 2266.0,1212.0 2266.5,1209.7 2267.0,1206.9 2267.5,1203.6 2268.0,1199.8 2268.5,1195.4 2269.0,1190.5 2269.5,1184.9 2270.0,1178.9 2270.5,1172.4 2271.0,1165.5 2271.5,1158.3 2272.0,1151.0 2272.5,1143.8 2273.0,1136.8 2273.5,1130.1 2274.0,1123.9 2274.5,1118.4 2275.0,1113.7 2275.5,1109.7 2276.0,1112.2 2276.5,1116.9 2277.0,1122.4 2277.5,1128.6 2278.0,1135.3 2278.5,1142.5 2279.0,1149.9 2279.5,1157.4 2280.0,1164.9 2280.5,1172.1 2281.0,1179.0 2281.5,1185.5 2282.0,1191.4 2282.5,1196.8 2283.0,1201.6 2283.5,1205.7 2284.0,1209.4 2284.5,1212.4 2285.0,1215.0 2285.5,1217.2 2286.0,1219.0 2286.5,1220.5 2287.0,1221.7 2287.5,1222.7 2288.0,1223.5 2288.5,1224.1 2289.0,1224.6 2289.5,1225.1 2290.0,1225.4 2290.5,1225.8 2291.0,1226.0 2291.5,1226.2 2292.0,1226.4 2292.5,1226.6 2293.0,1226.8 2293.5,1226.9 2294.0,1227.0 2294.5,1227.1 2295.0,1227.2 2295.5,1227.3 2296.0,1227.4 2296.5,1227.5 2297.0,1227.5 2297.5,1227.6 2298.0,1227.6 2298.5,1227.7 2299.0,1227.7 2299.5,1227.8 2300.0,1227.8 2300.5,1227.8 2301.0,1227.9 2301.5,1227.9 2302.0,1227.9 2302.5,1227.9 2303.0,1228.0 2303.5,1228.0 2304.0,1228.0 2304.5,1228.0 2305.0,1228.0 2305.5,1228.0 2306.0,1228.0 2306.5,1228.1 2307.0,1228.1 2307.5,1228.1 2308.0,1228.1 2308.5,1228.1 2309.0,1228.1 2309.5,1228.1 2310.0,1228.1 2310.5,1228.1 2311.0,1228.1 2311.5,1228.1 2312.0,1228.1 2312.5,1228.1 2313.0,1228.1 2313.5,1228.1 2314.0,1228.1 2314.5,1228.1 2315.0,1228.1 2315.5,1228.1 2316.0,1228.1 2316.5,1228.6 2317.0,1228.6 2317.5,1228.6 2318.0,1228.6 2318.5,1228.6 2319.0,1228.6 2319.5,1228.6 2320.0,1228.6 2320.5,1228.6 2321.0,1228.6 2321.5,1228.6 2322.0,1228.6 2322.5,1228.6 2323.0,1228.6 2323.5,1228.6 2324.0,1228.6 2324.5,1228.6 2325.0,1228.6 2325.5,1228.6 2326.0,1228.6 2326.5,1228.6 2327.0,1228.6 2327.5,1228.6 2328.0,1228.6 2328.5,1228.6 2329.0,1228.6 2329.5,1228.6 2330.0,1228.6 2330.5,1228.6 2331.0,1228.6 2331.5,1228.6 2332.0,1228.6 2332.5,1228.6 2333.0,1228.6 2333.5,1228.6 2334.0,1228.6 2334.5,1228.6 2335.0,1229.0 2335.5,1229.0 2336.0,1229.0 2336.5,1229.0 2337.0,1229.0 2337.5,1229.0 2338.0,1229.0 2338.5,1229.0 2339.0,1229.0 2339.5,1229.0 2340.0,1229.0 2340.5,1229.0 2341.0,1229.0 2341.5,1229.0 2342.0,1229.0 2342.5,1229.0 2343.0,1229.0 2343.5,1229.0 2344.0,1229.0 2344.5,1229.0 2345.0,1229.0 2345.5,1229.0 2346.0,1229.0 2346.5,1229.0 2347.0,1229.0 2347.5,1229.0 2348.0,1229.0 2348.5,1229.0 2349.0,1229.0 2349.5,1229.0 2350.0,1229.0 2350.5,1229.0 2351.0,1228.9 2351.5,1228.9 2352.0,1228.9 2352.5,1228.9 2353.0,1228.9 2353.5,1228.9 2354.0,1228.9 2354.5,1228.9 2355.0,1228.9 2355.5,1228.9 2356.0,1228.9 2356.5,1228.9 2357.0,1228.9 2357.5,1228.9 2358.0,1228.9 2358.5,1228.9 2359.0,1228.9 2359.5,1228.9 2360.0,1228.9 2360.5,1228.9 2361.0,1228.9 2361.5,1228.9 2362.0,1228.9 2362.5,1228.9 2363.0,1228.9 2363.5,1228.9 2364.0,1228.9 2364.5,1228.9 2365.0,1228.9 2365.5,1228.9 2366.0,1228.9 2366.5,1228.9 2367.0,1228.9 2367.5,1228.9 2368.0,1228.9 2368.5,1228.9 2369.0,1228.9 2369.5,1228.9 2370.0,1228.9 2370.5,1228.9 2371.0,1228.9 2371.5,1228.9 2372.0,1228.9 2372.5,1228.9 2373.0,1228.9 2373.5,1228.9 2374.0,1228.9 2374.5,1228.0 2375.0,1228.0 2375.5,1228.0 2376.0,1228.0 2376.5,1228.0 2377.0,1228.0 2377.5,1228.0 2378.0,1228.0 2378.5,1228.0 2379.0,1228.0 2379.5,1228.0 2380.0,1228.0 2380.5,1228.0 2381.0,1228.0 2381.5,1228.0 2382.0,1228.5 2382.5,1228.5 2383.0,1228.5 2383.5,1228.5 2384.0,1228.5 2384.5,1228.5 2385.0,1228.5 2385.5,1228.5 2386.0,1228.5 2386.5,1228.5 2387.0,1228.5 2387.5,1228.5 2388.0,1228.5 2388.5,1228.5 2389.0,1228.5 2389.5,1228.5 2390.0,1228.5 2390.5,1228.5 2391.0,1228.5 2391.5,1228.5 2392.0,1228.5 2392.5,1228.5 2393.0,1228.4 2393.5,1228.4 2394.0,1228.4 2394.5,1228.8 2395.0,1228.8 2395.5,1228.8 2396.0,1228.8 2396.5,1228.8 2397.0,1228.8 2397.5,1228.8 2398.0,1228.8 2398.5,1228.8 2399.0,1228.8 2399.5,1228.8 2400.0,1228.8 2400.5,1228.8 2401.0,1228.8 2401.5,1228.8 2402.0,1228.8 2402.5,1228.8 2403.0,1228.8 2403.5,1228.8 2404.0,1228.8 2404.5,1228.8 2405.0,1228.8 2405.5,1228.8 2406.0,1228.8 2406.5,1228.8 2407.0,1228.8 2407.5,1228.8 2408.0,1228.8 2408.5,1228.8 2409.0,1228.8 2409.5,1228.8 2410.0,1228.8 2410.5,1228.8 2411.0,1228.8 2411.5,1228.8 2412.0,1228.8 2412.5,1227.9 2413.0,1227.9 2413.5,1227.9 2414.0,1227.9 2414.5,1227.9 2415.0,1227.9 2415.5,1227.9 2416.0,1227.9 2416.5,1227.9 2417.0,1227.9 2417.5,1227.9 2418.0,1227.9 2418.5,1227.9 2419.0,1227.9 2419.5,1227.9 2420.0,1227.9 2420.5,1227.9 2421.0,1227.9 2421.5,1227.9 2422.0,1227.9 2422.5,1227.9 2423.0,1227.9 2423.5,1227.9 2424.0,1227.9 2424.5,1227.9 2425.0,1227.9 2425.5,1227.9 2426.0,1227.9 2426.5,1227.9 2427.0,1227.9 2427.5,1227.9 2428.0,1227.9 2428.5,1227.9 2429.0,1227.9 2429.5,1227.9 2430.0,1227.9 2430.5,1227.9 2431.0,1227.9 2431.5,1227.9 2432.0,1227.9 2432.5,1227.9 2433.0,1227.9 2433.5,1227.9 2434.0,1227.9 2434.5,1227.8 2435.0,1227.8 2435.5,1227.8 2436.0,1227.8 2436.5,1227.8 2437.0,1227.8 2437.5,1227.8 2438.0,1227.8 2438.5,1227.8 2439.0,1227.8 2439.5,1227.8 2440.0,1227.8 2440.5,1227.8 2441.0,1227.8 2441.5,1227.8 2442.0,1227.8 2442.5,1227.8 2443.0,1227.8 2443.5,1227.8 2444.0,1227.8 2444.5,1227.8 2445.0,1227.8 2445.5,1227.8 2446.0,1227.8 2446.5,1227.8 2447.0,1227.8 2447.5,1227.8 2448.0,1227.8 2448.5,1227.8 2449.0,1227.8 2449.5,1227.8 2450.0,1227.8 2450.5,1227.8 2451.0,1227.8 2451.5,1227.8 2452.0,1227.8 2452.5,1227.8 2453.0,1227.8 2453.5,1227.8 2454.0,1227.8 2454.5,1227.8 2455.0,1227.8 2455.5,1227.8 2456.0,1227.8 2456.5,1227.8 2457.0,1227.8 2457.5,1227.8 2458.0,1227.8 2458.5,1227.8 2459.0,1227.8 2459.5,1227.8 2460.0,1227.8 2460.5,1227.8 2461.0,1228.7 2461.5,1228.7 2462.0,1228.7 2462.5,1228.7 2463.0,1228.7 2463.5,1228.7 2464.0,1228.7 2464.5,1228.7 2465.0,1228.7 2465.5,1228.7 2466.0,1228.7 2466.5,1228.7 2467.0,1228.7 2467.5,1228.7 2468.0,1228.7 2468.5,1228.7 2469.0,1228.7 2469.5,1228.7 2470.0,1228.7 2470.5,1228.7 2471.0,1228.7 2471.5,1228.7 2472.0,1228.7 2472.5,1228.7 2473.0,1228.7 2473.5,1228.7 2474.0,1228.7 2474.5,1228.6 2475.0,1228.6 2475.5,1228.6 2476.0,1228.6 2476.5,1228.6 2477.0,1228.6 2477.5,1228.5 2478.0,1228.4 2478.5,1228.4 2479.0,1228.2 2479.5,1228.1 2480.0,1227.0 2480.5,1226.8 2481.0,1226.5 2481.5,1226.2 2482.0,1225.9 2482.5,1225.6 2483.0,1225.3 2483.5,1225.1 2484.0,1224.9 2484.5,1224.8 2485.0,1224.7 2485.5,1224.8 2486.0,1224.9 2486.5,1225.1 2487.0,1225.3 2487.5,1225.6 2488.0,1225.9 2488.5,1226.2 2489.0,1226.5 2489.5,1226.7 2490.0,1227.0 2490.5,1227.2 2491.0,1227.3 2491.5,1227.4 2492.0,1227.5 2492.5,1227.6 2493.0,1227.6 2493.5,1227.7 2494.0,1227.7 2494.5,1227.7 2495.0,1227.7 2495.5,1227.7 2496.0,1226.8" fill="none" stroke="#1786d6" stroke-width="1.85" stroke-linejoin="round"/><path d="M719.6 1232.8L793 1232.6" stroke="#222" stroke-width="1.5"/><path d="M719.6 1220.3V1232.8 M793 1232.6V1245.6" stroke="#1786d6" stroke-width="1.5"/><path d="M812.4 1232.5L854 1232.4" stroke="#222" stroke-width="1.5"/><path d="M812.4 1220.0V1232.5 M854 1232.4V1245.4" stroke="#1786d6" stroke-width="1.5"/><path d="M1167.2 1231.7L1225.9 1231.5" stroke="#222" stroke-width="1.5"/><path d="M1167.2 1219.2V1231.7 M1225.9 1231.5V1244.5" stroke="#1786d6" stroke-width="1.5"/><path d="M1446.2 1231.0L1511.3 1230.9" stroke="#222" stroke-width="1.5"/><path d="M1446.2 1218.5V1231.0 M1511.3 1230.9V1243.9" stroke="#1786d6" stroke-width="1.5"/><path d="M1632.5 1230.6L1713.2 1230.4" stroke="#222" stroke-width="1.5"/><path d="M1632.5 1218.1V1230.6 M1713.2 1230.4V1243.4" stroke="#1786d6" stroke-width="1.5"/><path d="M2224.2 1229.2L2303.7 1229.0" stroke="#222" stroke-width="1.5"/><path d="M2224.2 1216.7V1229.2 M2303.7 1229.0V1242.0" stroke="#1786d6" stroke-width="1.5"/><path d="M1199.7 1182.4V1231.6" stroke="#222" stroke-width="1.5"/><path d="M736.4000000000001 985.6H750.0L743.2 994.4Z" fill="#fff" stroke="#1786d6" stroke-width="1.4"/><path d="M835.7 1153H849.3L842.5 1161.8Z" fill="#fff" stroke="#1786d6" stroke-width="1.4"/><path d="M1187.75 1111H1198.25L1193 1118.5Z" fill="#fff" stroke="#1786d6" stroke-width="1.4"/><path d="M1199.8 1092.3H1213.3999999999999L1206.6 1101.1Z" fill="#fff" stroke="#1786d6" stroke-width="1.4"/><path d="M1484.8 1124.6H1498.3999999999999L1491.6 1133.3999999999999Z" fill="#fff" stroke="#1786d6" stroke-width="1.4"/><path d="M1663.6000000000001 1096.6H1677.2L1670.4 1105.3999999999999Z" fill="#fff" stroke="#1786d6" stroke-width="1.4"/><path d="M2269.0 1095.4H2282.6000000000004L2275.8 1104.2Z" fill="#fff" stroke="#1786d6" stroke-width="1.4"/><rect x="581" y="917.1" width="1915.4" height="29.299999999999955" fill="#fff" stroke="#8a8fa6" stroke-width="1.6"/><rect x="581" y="946.4" width="1915.4" height="316.5000000000001" fill="none" stroke="#8a8fa6" stroke-width="1.6"/><path d="M589.8 924.2L599.8 931.4L589.8 938.7Z" fill="none" stroke="#1a88d8" stroke-width="1.5"/></svg>
<span class="t" style="left:603.00px;top:922.61px;font-size:16.6px;line-height:19.073px;color:#1a88d8;transform:scaleX(1.0428);transform-origin:0 0;">STD010 | *ECD1A [s]</span>
<span class="t" style="left:529.70px;top:951.46px;font-size:16px;line-height:18.384px;color:#4f4f5c;transform:scaleX(1.1009);transform-origin:0 0;">x10</span>
<span class="t" style="left:563.20px;top:946.45px;font-size:14.5px;line-height:16.66px;color:#4f4f5c;">2</span>
<span class="t" style="left:561.30px;top:1203.66px;font-size:16px;line-height:18.384px;color:#4f4f5c;">0</span>
<span class="t" style="left:561.30px;top:1148.91px;font-size:16px;line-height:18.384px;color:#4f4f5c;">1</span>
<span class="t" style="left:561.30px;top:1094.16px;font-size:16px;line-height:18.384px;color:#4f4f5c;">2</span>
<span class="t" style="left:561.30px;top:1039.41px;font-size:16px;line-height:18.384px;color:#4f4f5c;">3</span>
<span class="t" style="left:561.30px;top:984.66px;font-size:16px;line-height:18.384px;color:#4f4f5c;">4</span>
<span class="t" style="left:562.30px;top:1271.06px;font-size:16px;line-height:18.384px;color:#4f4f5c;transform:scaleX(1.0372);transform-origin:0 0;">15.5</span>
<span class="t" style="left:636.38px;top:1271.06px;font-size:16px;line-height:18.384px;color:#4f4f5c;transform:scaleX(1.0372);transform-origin:0 0;">16.0</span>
<span class="t" style="left:710.45px;top:1271.06px;font-size:16px;line-height:18.384px;color:#4f4f5c;transform:scaleX(1.0372);transform-origin:0 0;">16.5</span>
<span class="t" style="left:784.52px;top:1271.06px;font-size:16px;line-height:18.384px;color:#4f4f5c;transform:scaleX(1.0372);transform-origin:0 0;">17.0</span>
<span class="t" style="left:858.60px;top:1271.06px;font-size:16px;line-height:18.384px;color:#4f4f5c;transform:scaleX(1.0372);transform-origin:0 0;">17.5</span>
<span class="t" style="left:932.67px;top:1271.06px;font-size:16px;line-height:18.384px;color:#4f4f5c;transform:scaleX(1.0372);transform-origin:0 0;">18.0</span>
<span class="t" style="left:1006.75px;top:1271.06px;font-size:16px;line-height:18.384px;color:#4f4f5c;transform:scaleX(1.0372);transform-origin:0 0;">18.5</span>
<span class="t" style="left:1080.82px;top:1271.06px;font-size:16px;line-height:18.384px;color:#4f4f5c;transform:scaleX(1.0372);transform-origin:0 0;">19.0</span>
<span class="t" style="left:1154.90px;top:1271.06px;font-size:16px;line-height:18.384px;color:#4f4f5c;transform:scaleX(1.0372);transform-origin:0 0;">19.5</span>
<span class="t" style="left:1228.97px;top:1271.06px;font-size:16px;line-height:18.384px;color:#4f4f5c;transform:scaleX(1.0372);transform-origin:0 0;">20.0</span>
<span class="t" style="left:1303.05px;top:1271.06px;font-size:16px;line-height:18.384px;color:#4f4f5c;transform:scaleX(1.0372);transform-origin:0 0;">20.5</span>
<span class="t" style="left:1377.12px;top:1271.06px;font-size:16px;line-height:18.384px;color:#4f4f5c;transform:scaleX(1.0372);transform-origin:0 0;">21.0</span>
<span class="t" style="left:1451.20px;top:1271.06px;font-size:16px;line-height:18.384px;color:#4f4f5c;transform:scaleX(1.0372);transform-origin:0 0;">21.5</span>
<span class="t" style="left:1525.28px;top:1271.06px;font-size:16px;line-height:18.384px;color:#4f4f5c;transform:scaleX(1.0372);transform-origin:0 0;">22.0</span>
<span class="t" style="left:1599.35px;top:1271.06px;font-size:16px;line-height:18.384px;color:#4f4f5c;transform:scaleX(1.0372);transform-origin:0 0;">22.5</span>
<span class="t" style="left:1673.42px;top:1271.06px;font-size:16px;line-height:18.384px;color:#4f4f5c;transform:scaleX(1.0372);transform-origin:0 0;">23.0</span>
<span class="t" style="left:1747.50px;top:1271.06px;font-size:16px;line-height:18.384px;color:#4f4f5c;transform:scaleX(1.0372);transform-origin:0 0;">23.5</span>
<span class="t" style="left:1821.58px;top:1271.06px;font-size:16px;line-height:18.384px;color:#4f4f5c;transform:scaleX(1.0372);transform-origin:0 0;">24.0</span>
<span class="t" style="left:1895.65px;top:1271.06px;font-size:16px;line-height:18.384px;color:#4f4f5c;transform:scaleX(1.0372);transform-origin:0 0;">24.5</span>
<span class="t" style="left:1969.72px;top:1271.06px;font-size:16px;line-height:18.384px;color:#4f4f5c;transform:scaleX(1.0372);transform-origin:0 0;">25.0</span>
<span class="t" style="left:2043.80px;top:1271.06px;font-size:16px;line-height:18.384px;color:#4f4f5c;transform:scaleX(1.0372);transform-origin:0 0;">25.5</span>
<span class="t" style="left:2117.88px;top:1271.06px;font-size:16px;line-height:18.384px;color:#4f4f5c;transform:scaleX(1.0372);transform-origin:0 0;">26.0</span>
<span class="t" style="left:2191.95px;top:1271.06px;font-size:16px;line-height:18.384px;color:#4f4f5c;transform:scaleX(1.0372);transform-origin:0 0;">26.5</span>
<span class="t" style="left:2266.03px;top:1271.06px;font-size:16px;line-height:18.384px;color:#4f4f5c;transform:scaleX(1.0372);transform-origin:0 0;">27.0</span>
<span class="t" style="left:2340.10px;top:1271.06px;font-size:16px;line-height:18.384px;color:#4f4f5c;transform:scaleX(1.0372);transform-origin:0 0;">27.5</span>
<span class="t" style="left:2414.18px;top:1271.06px;font-size:16px;line-height:18.384px;color:#4f4f5c;transform:scaleX(1.0372);transform-origin:0 0;">28.0</span>
<span class="t" style="left:1463.00px;top:1289.86px;font-size:16px;line-height:18.384px;color:#4f4f5c;transform:scaleX(1.0542);transform-origin:0 0;">Retention time [min]</span>
<span class="t" style="left:742.0px;top:1049.5px;font-size:16.8px;line-height:16.8px;color:#555;transform-origin:0 0;transform:rotate(-90deg) translateY(-50%);">16.598</span>
<span class="t" style="left:841.0px;top:1147.5px;font-size:16.8px;line-height:16.8px;color:#555;transform-origin:0 0;transform:rotate(-90deg) translateY(-50%);">17.265</span>
<span class="t" style="left:1205.0px;top:1087.3px;font-size:16.8px;line-height:16.8px;color:#555;transform-origin:0 0;transform:rotate(-90deg) translateY(-50%);">19.717</span>
<span class="t" style="left:1490.7px;top:1119.3px;font-size:16.8px;line-height:16.8px;color:#555;transform-origin:0 0;transform:rotate(-90deg) translateY(-50%);">21.644</span>
<span class="t" style="left:1669.3px;top:1091.0px;font-size:16.8px;line-height:16.8px;color:#555;transform-origin:0 0;transform:rotate(-90deg) translateY(-50%);">22.851</span>
<span class="t" style="left:2275.0px;top:1089.0px;font-size:16.8px;line-height:16.8px;color:#555;transform-origin:0 0;transform:rotate(-90deg) translateY(-50%);">26.936</span>
<span class="t" style="left:507.5px;top:1158.3px;font-size:16px;line-height:16px;color:#4f4f5c;transform-origin:0 0;transform:rotate(-90deg) translateY(-50%) scaleX(1.0149);">Response [Hz]</span>
<div class="b" style="left:3px;top:1348.7px;width:2511px;height:61.700000000000045px;background:#1b2836;"></div>
<svg class="b" style="left:0px;top:1340px;" width="2516" height="72" viewBox="0 1340 2516 72"><path d="M26.8 1369.3L36.5 1367.9V1378H26.8Z M38 1367.7L52.3 1365.7V1378H38Z M26.8 1379.8H36.5V1390L26.8 1388.6Z M38 1379.8H52.3V1392.2L38 1390.2Z" fill="#fff"/><circle cx="118.6" cy="1375.8" r="7.9" fill="none" stroke="#fff" stroke-width="1.8"/><path d="M113 1382L102.6 1392.3" stroke="#fff" stroke-width="1.8"/><path d="M178 1374.3H195.2V1384.3H178Z M178 1371V1368.6H195.2V1371 M178 1387.6V1390H195.2V1387.6 M199.5 1368V1372 M199.5 1379.5V1390.5" fill="none" stroke="#fff" stroke-width="1.7"/><rect x="198" y="1374" width="3.2" height="3.6" fill="#fff"/><path d="M252 1365.7H265L267.3 1367.8H285.3V1392.6H252Z" fill="#ffd767"/><path d="M252 1365.7H265L267 1367.6L265 1369.5H252Z" fill="#f2b431"/><path d="M258.5 1392.6V1383.6Q258.5 1381.8 260.3 1381.8H277.8Q279.6 1381.8 279.6 1383.6V1392.6H273.8V1387H265.3V1392.6Z" fill="#3a96dd"/><g><path d="M359 1380.5H338.5C339 1386.5 348 1389.5 355.5 1384.5L358 1388.5C347 1396 332 1391 332 1379C332 1366 346 1362 353.5 1366.5C358.5 1369.5 360 1375 359 1380.5Z M339 1375.5H352C351.5 1369.5 340.5 1369 339 1375.5Z" fill="#3cc1f5" fill-rule="evenodd"/><path d="M330.5 1392.5C324 1385 337 1367 356 1362.5C362 1361 362.5 1364.5 361 1368" fill="none" stroke="#f2b90f" stroke-width="2.2"/><path d="M330.5 1392.5C333 1395.5 338 1394 341 1392" fill="none" stroke="#f2b90f" stroke-width="2.2"/></g><rect x="403.8" y="1364.8" width="33.8" height="28" fill="#000" stroke="#8e9399" stroke-width="1.2"/><rect x="404.4" y="1365.3" width="32.6" height="2.6" fill="#b5b9be"/><path d="M422 1377.8H431" stroke="#fff" stroke-width="1.4"/><path d="M490.5 1367.6H516.8L509 1390H482.4Z" fill="#6bbcf5"/><path d="M492.5 1370H513.5L507.5 1387.6H486Z" fill="#858b93"/><path d="M494.3 1372.2H510.6L505.8 1385.5H489.3Z" fill="#3c9cf0"/><rect x="495.3" y="1376.2" width="11.4" height="3.8" fill="#fff"/><path d="M481 1370.5H488M480 1377H486M480 1383.5H484" stroke="#4a86b8" stroke-width="1.2"/><circle cx="575.1" cy="1379.6" r="8.6" fill="none" stroke="#fff" stroke-width="4.2"/><rect x="-3.4" y="-14.4" width="6.8" height="6" fill="#fff" transform="translate(575.1 1379.6) rotate(0)"/><rect x="-3.4" y="-14.4" width="6.8" height="6" fill="#fff" transform="translate(575.1 1379.6) rotate(45)"/><rect x="-3.4" y="-14.4" width="6.8" height="6" fill="#fff" transform="translate(575.1 1379.6) rotate(90)"/><rect x="-3.4" y="-14.4" width="6.8" height="6" fill="#fff" transform="translate(575.1 1379.6) rotate(135)"/><rect x="-3.4" y="-14.4" width="6.8" height="6" fill="#fff" transform="translate(575.1 1379.6) rotate(180)"/><rect x="-3.4" y="-14.4" width="6.8" height="6" fill="#fff" transform="translate(575.1 1379.6) rotate(225)"/><rect x="-3.4" y="-14.4" width="6.8" height="6" fill="#fff" transform="translate(575.1 1379.6) rotate(270)"/><rect x="-3.4" y="-14.4" width="6.8" height="6" fill="#fff" transform="translate(575.1 1379.6) rotate(315)"/><rect x="614.3" y="1348.7" width="75.1" height="59.2" fill="#47525b"/><rect x="614.3" y="1407.7" width="75.1" height="2.8" fill="#7fc2ff"/><rect x="633.1" y="1361" width="37.7" height="37.6" fill="#e8eef5"/><rect x="633.1" y="1392.9" width="37.7" height="5.7" fill="#0a7bd0"/><rect x="652" y="1392.9" width="6" height="5.7" fill="#18a8e0"/><rect x="658" y="1392.9" width="9.5" height="5.7" fill="#073a6b"/><path d="M655 1368.8L659 1364.3L662.2 1367.6Q664 1369 666.5 1368.7H670.8" fill="none" stroke="#0a7bd0" stroke-width="2"/><path d="M2175 1384.5L2184.3 1374.6L2193.6 1384.5" fill="none" stroke="#fff" stroke-width="1.8"/><path d="M2213.5 1372H2233.3V1385.3H2217.5 M2218 1391H2230 M2224 1385.5V1391" fill="none" stroke="#fff" stroke-width="1.7"/><path d="M2209.8 1371.2H2217.2V1377.5H2209.8Z M2213.5 1377.5V1390.5" fill="#1b2836" stroke="#fff" stroke-width="1.5"/><path d="M2247.8 1377H2250.8L2255.8 1371.5V1389L2250.8 1383.8H2247.8Z" fill="none" stroke="#fff" stroke-width="1.5"/><circle cx="2264.8" cy="1385.4" r="7" fill="#e81123"/><path d="M2261.7 1382.3L2267.9 1388.5M2267.9 1382.3L2261.7 1388.5" stroke="#fff" stroke-width="1.7"/><path d="M2454.8 1369.3H2477V1386.3H2469.5L2465.9 1390.2L2462.3 1386.3H2454.8Z" fill="none" stroke="#fff" stroke-width="1.8"/><path d="M2510.3 1348.7V1410.4" stroke="#7b8691" stroke-width="1.2"/></svg>
<span class="t" style="left:638.40px;top:1362.31px;font-size:25.5px;line-height:29.3px;color:#0a7bd0;font-weight:bold;transform:scaleX(0.6299);transform-origin:0 0;">D</span>
<span class="t" style="left:652.00px;top:1364.62px;font-size:23px;line-height:26.427px;color:#0a7bd0;font-weight:bold;transform:scaleX(0.9381);transform-origin:0 0;">a</span>
<span class="t" style="left:409.00px;top:1373.05px;font-size:7px;line-height:8.043px;color:#ddd;font-weight:bold;">C:\</span>
<span class="t" style="left:2289.80px;top:1368.96px;font-size:18.5px;line-height:21.256px;color:#fff;transform:scaleX(0.8500);transform-origin:0 0;-webkit-text-stroke:0.35px #fff;">DEU</span>
<span class="t" style="left:2353.00px;top:1354.16px;font-size:18.5px;line-height:21.256px;color:#fff;transform:scaleX(0.9246);transform-origin:0 0;-webkit-text-stroke:0.35px #fff;">1:42 PM</span>
<span class="t" style="left:2345.00px;top:1382.36px;font-size:18.5px;line-height:21.256px;color:#fff;transform:scaleX(0.9700);transform-origin:0 0;-webkit-text-stroke:0.35px #fff;">1/11/2021</span>
</body></html>
